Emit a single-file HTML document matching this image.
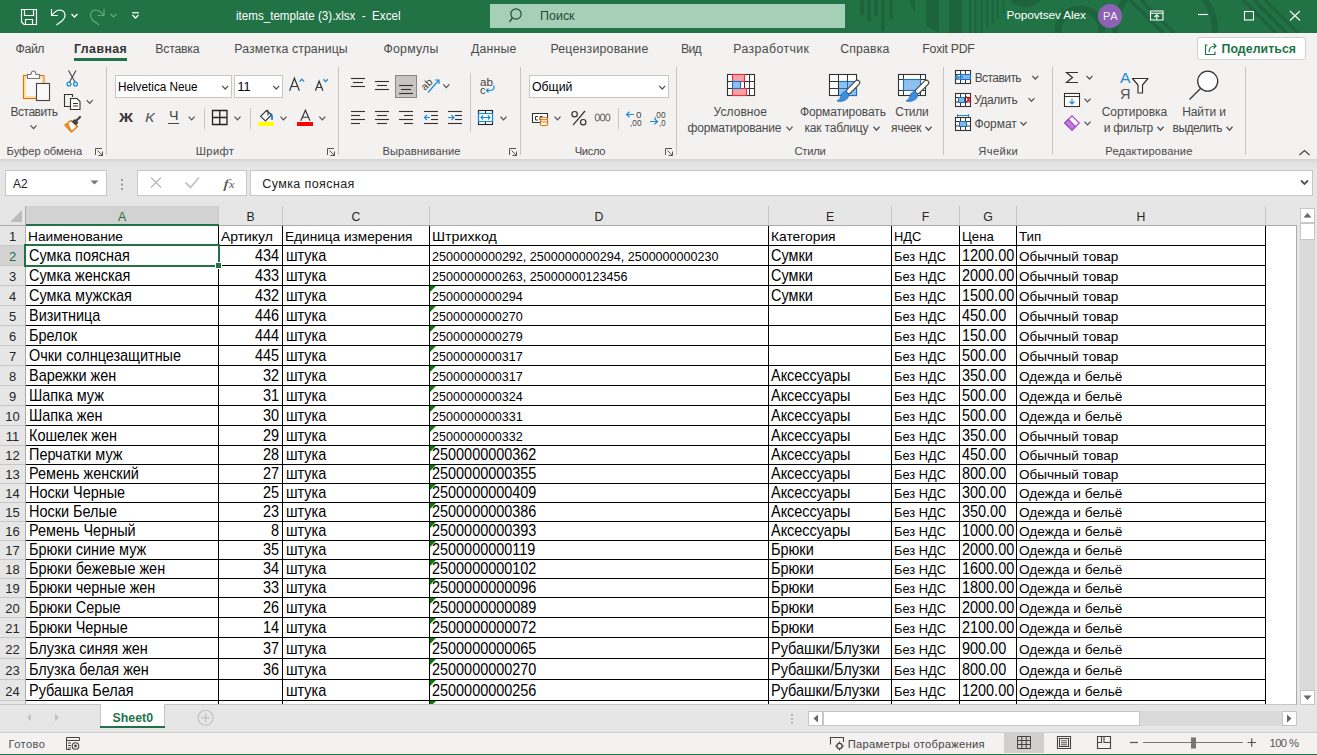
<!DOCTYPE html>
<html><head><meta charset="utf-8"><style>
html,body{margin:0;padding:0;}
body{width:1317px;height:755px;overflow:hidden;position:relative;background:#f3f2f1;font-family:"Liberation Sans",sans-serif;}
body>div,body>span,body>svg{position:absolute;}
span{white-space:pre;}
</style></head><body>
<div style="left:0px;top:0px;width:1317px;height:33px;background:#217346;"></div>
<span style="left:236.40px;top:10.20px;font-family:'Liberation Sans',sans-serif;font-size:12px;line-height:12px;color:#fff;font-weight:400;font-style:normal;transform:scaleX(0.9674);transform-origin:0 0;">items_template (3).xlsx  -  Excel</span>
<div style="left:490px;top:4px;width:355px;height:24px;background:#a6cfb7;"></div>
<span style="left:540.30px;top:10.20px;font-family:'Liberation Sans',sans-serif;font-size:12px;line-height:12px;color:#1d4d33;font-weight:400;font-style:normal;transform:scaleX(1.0401);transform-origin:0 0;">Поиск</span>
<svg style="left:0px;top:0px;" width="1317" height="33" viewBox="0 0 1317 33"><g fill="#1d643c"><rect x="860" y="0" width="4" height="15"/><rect x="867" y="0" width="4" height="22"/><rect x="874" y="0" width="4" height="16"/><rect x="881" y="0" width="4" height="31"/><rect x="889" y="0" width="4" height="19"/><path d="M909,0 H915 V13 Z"/><path d="M926,0 H939 V33 L926,26 Z"/><rect x="949" y="0" width="13" height="33"/><rect x="969" y="0" width="2" height="33"/><rect x="974.5" y="0" width="2" height="33"/><rect x="980.5" y="0" width="2" height="33"/><rect x="986" y="0" width="2" height="28"/><rect x="991.5" y="0" width="2" height="24"/><rect x="996.5" y="0" width="2" height="19"/><rect x="1002.5" y="0" width="2" height="13"/><circle cx="1025" cy="-14" r="21"/></g><circle cx="1080" cy="31" r="22" fill="none" stroke="#1d643c" stroke-width="7"/><path d="M1130,0 L1163,33 M1141,0 L1174,33 M1243,0 L1276,33 M1254,0 L1287,33 M1265,0 L1298,33" stroke="#1d643c" stroke-width="3.5"/><circle cx="1165" cy="30" r="50" fill="none" stroke="#1d643c" stroke-width="6"/><circle cx="1110" cy="16" r="12" fill="#8d62b5"/></svg>
<span style="left:1006.50px;top:10.37px;font-family:'Liberation Sans',sans-serif;font-size:11.8px;line-height:11.8px;color:#fff;font-weight:400;font-style:normal;letter-spacing:-0.098px;">Popovtsev Alex</span>
<span style="left:1103.05px;top:11.05px;font-family:'Liberation Sans',sans-serif;font-size:11px;line-height:11px;color:#f4eefa;font-weight:400;font-style:normal;letter-spacing:0.641px;">PA</span>
<div style="left:0px;top:33px;width:1317px;height:126px;background:#f3f2f1;"></div>
<span style="left:15.60px;top:42.95px;font-family:'Liberation Sans',sans-serif;font-size:12.3px;line-height:12.3px;color:#4a4a4a;font-weight:400;font-style:normal;letter-spacing:-0.445px;">Файл</span>
<span style="left:74.00px;top:42.95px;font-family:'Liberation Sans',sans-serif;font-size:12.3px;line-height:12.3px;color:#333;font-weight:700;font-style:normal;letter-spacing:0.464px;">Главная</span>
<span style="left:155.30px;top:42.95px;font-family:'Liberation Sans',sans-serif;font-size:12.3px;line-height:12.3px;color:#4a4a4a;font-weight:400;font-style:normal;letter-spacing:-0.253px;">Вставка</span>
<span style="left:234.30px;top:42.95px;font-family:'Liberation Sans',sans-serif;font-size:12.3px;line-height:12.3px;color:#4a4a4a;font-weight:400;font-style:normal;letter-spacing:0.115px;">Разметка страницы</span>
<span style="left:383.40px;top:42.95px;font-family:'Liberation Sans',sans-serif;font-size:12.3px;line-height:12.3px;color:#4a4a4a;font-weight:400;font-style:normal;letter-spacing:0.247px;">Формулы</span>
<span style="left:470.90px;top:42.95px;font-family:'Liberation Sans',sans-serif;font-size:12.3px;line-height:12.3px;color:#4a4a4a;font-weight:400;font-style:normal;letter-spacing:0.212px;">Данные</span>
<span style="left:550.40px;top:42.95px;font-family:'Liberation Sans',sans-serif;font-size:12.3px;line-height:12.3px;color:#4a4a4a;font-weight:400;font-style:normal;letter-spacing:0.227px;">Рецензирование</span>
<span style="left:681.00px;top:42.95px;font-family:'Liberation Sans',sans-serif;font-size:12.3px;line-height:12.3px;color:#4a4a4a;font-weight:400;font-style:normal;letter-spacing:-0.775px;">Вид</span>
<span style="left:733.30px;top:42.95px;font-family:'Liberation Sans',sans-serif;font-size:12.3px;line-height:12.3px;color:#4a4a4a;font-weight:400;font-style:normal;letter-spacing:0.398px;">Разработчик</span>
<span style="left:840.30px;top:42.95px;font-family:'Liberation Sans',sans-serif;font-size:12.3px;line-height:12.3px;color:#4a4a4a;font-weight:400;font-style:normal;letter-spacing:0.125px;">Справка</span>
<span style="left:922.30px;top:42.95px;font-family:'Liberation Sans',sans-serif;font-size:12.3px;line-height:12.3px;color:#4a4a4a;font-weight:400;font-style:normal;letter-spacing:-0.259px;">Foxit PDF</span>
<div style="left:74px;top:58px;width:53px;height:3px;background:#217346;"></div>
<div style="left:1197px;top:37px;width:109px;height:23px;background:#fff;border:1px solid #d2d0ce;border-radius:2px;box-sizing:border-box;"></div>
<span style="left:1221.50px;top:42.95px;font-family:'Liberation Sans',sans-serif;font-size:12.3px;line-height:12.3px;color:#217346;font-weight:700;font-style:normal;letter-spacing:0.076px;">Поделиться</span>
<div style="left:0px;top:159px;width:1317px;height:11px;background:linear-gradient(#d4d4d4,#e2e2e2 40%,#e6e6e6);"></div>
<div style="left:106px;top:67px;width:1px;height:88px;background:#c8c6c4;"></div>
<div style="left:338px;top:67px;width:1px;height:88px;background:#c8c6c4;"></div>
<div style="left:520px;top:67px;width:1px;height:88px;background:#c8c6c4;"></div>
<div style="left:676px;top:67px;width:1px;height:88px;background:#c8c6c4;"></div>
<div style="left:943px;top:67px;width:1px;height:88px;background:#c8c6c4;"></div>
<div style="left:1052px;top:67px;width:1px;height:88px;background:#c8c6c4;"></div>
<div style="left:1245px;top:67px;width:1px;height:88px;background:#c8c6c4;"></div>
<span style="left:6.60px;top:145.88px;font-family:'Liberation Sans',sans-serif;font-size:11.2px;line-height:11.2px;color:#4a4a4a;font-weight:400;font-style:normal;letter-spacing:-0.039px;">Буфер обмена</span>
<span style="left:195.70px;top:145.88px;font-family:'Liberation Sans',sans-serif;font-size:11.2px;line-height:11.2px;color:#4a4a4a;font-weight:400;font-style:normal;letter-spacing:0.372px;">Шрифт</span>
<span style="left:382.40px;top:145.88px;font-family:'Liberation Sans',sans-serif;font-size:11.2px;line-height:11.2px;color:#4a4a4a;font-weight:400;font-style:normal;letter-spacing:0.108px;">Выравнивание</span>
<span style="left:574.80px;top:145.88px;font-family:'Liberation Sans',sans-serif;font-size:11.2px;line-height:11.2px;color:#4a4a4a;font-weight:400;font-style:normal;letter-spacing:-0.397px;">Число</span>
<span style="left:794.40px;top:145.88px;font-family:'Liberation Sans',sans-serif;font-size:11.2px;line-height:11.2px;color:#4a4a4a;font-weight:400;font-style:normal;letter-spacing:-0.209px;">Стили</span>
<span style="left:978.30px;top:145.88px;font-family:'Liberation Sans',sans-serif;font-size:11.2px;line-height:11.2px;color:#4a4a4a;font-weight:400;font-style:normal;letter-spacing:0.374px;">Ячейки</span>
<span style="left:1105.30px;top:145.88px;font-family:'Liberation Sans',sans-serif;font-size:11.2px;line-height:11.2px;color:#4a4a4a;font-weight:400;font-style:normal;letter-spacing:0.151px;">Редактирование</span>
<span style="left:10.60px;top:106.20px;font-family:'Liberation Sans',sans-serif;font-size:12px;line-height:12px;color:#4a4a4a;font-weight:400;font-style:normal;letter-spacing:-0.511px;">Вставить</span>
<div style="left:115px;top:75px;width:117px;height:23px;background:#fff;border:1px solid #c6c6c6;box-sizing:border-box;"></div>
<div style="left:234px;top:75px;width:49px;height:23px;background:#fff;border:1px solid #c6c6c6;box-sizing:border-box;"></div>
<span style="left:118.30px;top:80.78px;font-family:'Liberation Sans',sans-serif;font-size:12.5px;line-height:12.5px;color:#000;font-weight:400;font-style:normal;transform:scaleX(0.9391);transform-origin:0 0;">Helvetica Neue</span>
<span style="left:237.60px;top:80.78px;font-family:'Liberation Sans',sans-serif;font-size:12.5px;line-height:12.5px;color:#000;font-weight:400;font-style:normal;">11</span>
<span style="left:118.50px;top:110.93px;font-family:'Liberation Sans',sans-serif;font-size:13.5px;line-height:13.5px;color:#333;font-weight:700;font-style:normal;transform:scaleX(1.1472);transform-origin:0 0;">Ж</span>
<span style="left:145.00px;top:110.93px;font-family:'Liberation Sans',sans-serif;font-size:13.5px;line-height:13.5px;color:#555;font-weight:400;font-style:italic;transform:scaleX(1.1922);transform-origin:0 0;">К</span>
<span style="left:168.80px;top:109.35px;font-family:'Liberation Sans',sans-serif;font-size:13px;line-height:13px;color:#444;font-weight:400;font-style:normal;transform:scaleX(1.0955);transform-origin:0 0;">Ч</span>
<div style="left:168px;top:123px;width:11px;height:1px;background:#444;"></div>
<div style="left:204px;top:108px;width:1px;height:21px;background:#c8c6c4;"></div>
<div style="left:250px;top:108px;width:1px;height:21px;background:#c8c6c4;"></div>
<div style="left:258px;top:122px;width:16px;height:4px;background:#ffff00;"></div>
<div style="left:297px;top:122px;width:16px;height:4px;background:#ff0000;"></div>
<div style="left:470px;top:73px;width:1px;height:59px;background:#c8c6c4;"></div>
<span style="left:480.00px;top:77.05px;font-family:'Liberation Sans',sans-serif;font-size:11px;line-height:11px;color:#444;font-weight:400;font-style:normal;transform:scaleX(1.0612);transform-origin:0 0;">ab</span>
<span style="left:480.00px;top:85.05px;font-family:'Liberation Sans',sans-serif;font-size:11px;line-height:11px;color:#444;font-weight:400;font-style:normal;">c</span>
<div style="left:529px;top:75px;width:140px;height:23px;background:#fff;border:1px solid #c6c6c6;box-sizing:border-box;"></div>
<span style="left:532.30px;top:80.78px;font-family:'Liberation Sans',sans-serif;font-size:12.5px;line-height:12.5px;color:#000;font-weight:400;font-style:normal;transform:scaleX(0.9844);transform-origin:0 0;">Общий</span>
<div style="left:618px;top:108px;width:1px;height:21px;background:#c8c6c4;"></div>
<span style="left:636.00px;top:110.33px;font-family:'Liberation Sans',sans-serif;font-size:9.5px;line-height:9.5px;color:#444;font-weight:400;font-style:normal;transform:scaleX(1.0383);transform-origin:0 0;">0</span>
<span style="left:629.50px;top:118.33px;font-family:'Liberation Sans',sans-serif;font-size:9.5px;line-height:9.5px;color:#444;font-weight:400;font-style:normal;transform:scaleX(0.8700);transform-origin:0 0;">,00</span>
<span style="left:653.50px;top:110.33px;font-family:'Liberation Sans',sans-serif;font-size:9.5px;line-height:9.5px;color:#444;font-weight:400;font-style:normal;transform:scaleX(0.8700);transform-origin:0 0;">,00</span>
<span style="left:658.50px;top:118.33px;font-family:'Liberation Sans',sans-serif;font-size:9.5px;line-height:9.5px;color:#444;font-weight:400;font-style:normal;transform:scaleX(0.8189);transform-origin:0 0;">,0</span>
<span style="left:713.60px;top:106.20px;font-family:'Liberation Sans',sans-serif;font-size:12px;line-height:12px;color:#4a4a4a;font-weight:400;font-style:normal;letter-spacing:0.045px;">Условное</span>
<span style="left:687.50px;top:122.20px;font-family:'Liberation Sans',sans-serif;font-size:12px;line-height:12px;color:#4a4a4a;font-weight:400;font-style:normal;letter-spacing:-0.181px;">форматирование</span>
<span style="left:799.90px;top:106.20px;font-family:'Liberation Sans',sans-serif;font-size:12px;line-height:12px;color:#4a4a4a;font-weight:400;font-style:normal;letter-spacing:-0.090px;">Форматировать</span>
<span style="left:804.50px;top:122.20px;font-family:'Liberation Sans',sans-serif;font-size:12px;line-height:12px;color:#4a4a4a;font-weight:400;font-style:normal;letter-spacing:-0.172px;">как таблицу</span>
<span style="left:895.30px;top:106.20px;font-family:'Liberation Sans',sans-serif;font-size:12px;line-height:12px;color:#4a4a4a;font-weight:400;font-style:normal;letter-spacing:-0.295px;">Стили</span>
<span style="left:891.10px;top:122.20px;font-family:'Liberation Sans',sans-serif;font-size:12px;line-height:12px;color:#4a4a4a;font-weight:400;font-style:normal;letter-spacing:-0.215px;">ячеек</span>
<span style="left:974.70px;top:72.20px;font-family:'Liberation Sans',sans-serif;font-size:12px;line-height:12px;color:#4a4a4a;font-weight:400;font-style:normal;letter-spacing:-0.568px;">Вставить</span>
<span style="left:974.00px;top:94.20px;font-family:'Liberation Sans',sans-serif;font-size:12px;line-height:12px;color:#4a4a4a;font-weight:400;font-style:normal;letter-spacing:-0.355px;">Удалить</span>
<span style="left:974.40px;top:118.20px;font-family:'Liberation Sans',sans-serif;font-size:12px;line-height:12px;color:#4a4a4a;font-weight:400;font-style:normal;letter-spacing:-0.048px;">Формат</span>
<span style="left:1119.50px;top:71.08px;font-family:'Liberation Sans',sans-serif;font-size:14.5px;line-height:14.5px;color:#1e8bd8;font-weight:400;font-style:normal;transform:scaleX(1.0856);transform-origin:0 0;">A</span>
<span style="left:1119.50px;top:86.50px;font-family:'Liberation Sans',sans-serif;font-size:14px;line-height:14px;color:#555;font-weight:400;font-style:normal;transform:scaleX(1.0370);transform-origin:0 0;">Я</span>
<span style="left:1101.70px;top:106.20px;font-family:'Liberation Sans',sans-serif;font-size:12px;line-height:12px;color:#4a4a4a;font-weight:400;font-style:normal;letter-spacing:-0.040px;">Сортировка</span>
<span style="left:1103.70px;top:122.20px;font-family:'Liberation Sans',sans-serif;font-size:12px;line-height:12px;color:#4a4a4a;font-weight:400;font-style:normal;letter-spacing:-0.230px;">и фильтр</span>
<span style="left:1182.20px;top:106.20px;font-family:'Liberation Sans',sans-serif;font-size:12px;line-height:12px;color:#4a4a4a;font-weight:400;font-style:normal;letter-spacing:-0.080px;">Найти и</span>
<span style="left:1172.60px;top:122.20px;font-family:'Liberation Sans',sans-serif;font-size:12px;line-height:12px;color:#4a4a4a;font-weight:400;font-style:normal;letter-spacing:-0.533px;">выделить</span>
<div style="left:0px;top:170px;width:1317px;height:36px;background:#e6e6e6;"></div>
<div style="left:5px;top:170px;width:102px;height:26px;background:#fff;border:1px solid #c6c6c6;box-sizing:border-box;"></div>
<span style="left:12.50px;top:177.78px;font-family:'Liberation Sans',sans-serif;font-size:12.5px;line-height:12.5px;color:#222;font-weight:400;font-style:normal;transform:scaleX(0.9479);transform-origin:0 0;">A2</span>
<div style="left:137px;top:170px;width:110px;height:26px;background:#fff;border:1px solid #c6c6c6;box-sizing:border-box;"></div>
<span style="left:223.00px;top:176.93px;font-family:'Liberation Serif',sans-serif;font-size:13.5px;line-height:13.5px;color:#555;font-weight:400;font-style:italic;transform:scaleX(1.5934);transform-origin:0 0;">f</span>
<span style="left:229.00px;top:179.90px;font-family:'Liberation Serif',sans-serif;font-size:10px;line-height:10px;color:#555;font-weight:400;font-style:italic;transform:scaleX(1.2351);transform-origin:0 0;">x</span>
<div style="left:250px;top:170px;width:1063px;height:26px;background:#fff;border:1px solid #c6c6c6;box-sizing:border-box;"></div>
<span style="left:262.20px;top:177.78px;font-family:'Liberation Sans',sans-serif;font-size:12.5px;line-height:12.5px;color:#222;font-weight:400;font-style:normal;letter-spacing:0.411px;">Сумка поясная</span>
<div style="left:0px;top:206px;width:1297px;height:19px;background:#e6e6e6;"></div>
<div style="left:0px;top:225px;width:25px;height:479px;background:#e6e6e6;"></div>
<div style="left:26px;top:226px;width:1270px;height:478px;background:#fff;"></div>
<div style="left:218px;top:206px;width:1px;height:19px;background:#c6c6c6;"></div>
<div style="left:282px;top:206px;width:1px;height:19px;background:#c6c6c6;"></div>
<div style="left:429px;top:206px;width:1px;height:19px;background:#c6c6c6;"></div>
<div style="left:768px;top:206px;width:1px;height:19px;background:#c6c6c6;"></div>
<div style="left:891px;top:206px;width:1px;height:19px;background:#c6c6c6;"></div>
<div style="left:959px;top:206px;width:1px;height:19px;background:#c6c6c6;"></div>
<div style="left:1016px;top:206px;width:1px;height:19px;background:#c6c6c6;"></div>
<div style="left:1265px;top:206px;width:1px;height:19px;background:#c6c6c6;"></div>
<div style="left:26px;top:206px;width:192px;height:18px;background:#d2d2d2;"></div>
<div style="left:0px;top:225px;width:1297px;height:1px;background:#ababab;"></div>
<div style="left:26px;top:224px;width:193px;height:2px;background:#217346;"></div>
<svg style="left:10px;top:210px;" width="13" height="12" viewBox="0 0 13 12"><polygon points="12,0 12,12 0,12" fill="#bcbcbc"/></svg>
<span style="left:117.90px;top:210.94px;font-family:'Liberation Sans',sans-serif;font-size:12.3px;line-height:12.3px;color:#217346;font-weight:400;font-style:normal;">A</span>
<span style="left:246.40px;top:210.94px;font-family:'Liberation Sans',sans-serif;font-size:12.3px;line-height:12.3px;color:#262626;font-weight:400;font-style:normal;">B</span>
<span style="left:351.55px;top:210.94px;font-family:'Liberation Sans',sans-serif;font-size:12.3px;line-height:12.3px;color:#262626;font-weight:400;font-style:normal;">C</span>
<span style="left:594.55px;top:210.94px;font-family:'Liberation Sans',sans-serif;font-size:12.3px;line-height:12.3px;color:#262626;font-weight:400;font-style:normal;">D</span>
<span style="left:825.90px;top:210.94px;font-family:'Liberation Sans',sans-serif;font-size:12.3px;line-height:12.3px;color:#262626;font-weight:400;font-style:normal;">E</span>
<span style="left:921.74px;top:210.94px;font-family:'Liberation Sans',sans-serif;font-size:12.3px;line-height:12.3px;color:#262626;font-weight:400;font-style:normal;">F</span>
<span style="left:983.21px;top:210.94px;font-family:'Liberation Sans',sans-serif;font-size:12.3px;line-height:12.3px;color:#262626;font-weight:400;font-style:normal;">G</span>
<span style="left:1136.55px;top:210.94px;font-family:'Liberation Sans',sans-serif;font-size:12.3px;line-height:12.3px;color:#262626;font-weight:400;font-style:normal;">H</span>
<div style="left:25px;top:206px;width:1px;height:498px;background:#ababab;"></div>
<div style="left:0px;top:246px;width:25px;height:19px;background:#d2d2d2;"></div>
<div style="left:0px;top:245px;width:25px;height:1px;background:#c6c6c6;"></div>
<span style="left:8.88px;top:230.35px;font-family:'Liberation Sans',sans-serif;font-size:13px;line-height:13px;color:#262626;font-weight:400;font-style:normal;">1</span>
<div style="left:0px;top:265px;width:25px;height:1px;background:#c6c6c6;"></div>
<span style="left:8.88px;top:250.35px;font-family:'Liberation Sans',sans-serif;font-size:13px;line-height:13px;color:#217346;font-weight:400;font-style:normal;">2</span>
<div style="left:0px;top:285px;width:25px;height:1px;background:#c6c6c6;"></div>
<span style="left:8.88px;top:270.35px;font-family:'Liberation Sans',sans-serif;font-size:13px;line-height:13px;color:#262626;font-weight:400;font-style:normal;">3</span>
<div style="left:0px;top:305px;width:25px;height:1px;background:#c6c6c6;"></div>
<span style="left:8.88px;top:290.35px;font-family:'Liberation Sans',sans-serif;font-size:13px;line-height:13px;color:#262626;font-weight:400;font-style:normal;">4</span>
<div style="left:0px;top:325px;width:25px;height:1px;background:#c6c6c6;"></div>
<span style="left:8.88px;top:310.35px;font-family:'Liberation Sans',sans-serif;font-size:13px;line-height:13px;color:#262626;font-weight:400;font-style:normal;">5</span>
<div style="left:0px;top:345px;width:25px;height:1px;background:#c6c6c6;"></div>
<span style="left:8.88px;top:330.35px;font-family:'Liberation Sans',sans-serif;font-size:13px;line-height:13px;color:#262626;font-weight:400;font-style:normal;">6</span>
<div style="left:0px;top:365px;width:25px;height:1px;background:#c6c6c6;"></div>
<span style="left:8.88px;top:350.35px;font-family:'Liberation Sans',sans-serif;font-size:13px;line-height:13px;color:#262626;font-weight:400;font-style:normal;">7</span>
<div style="left:0px;top:385px;width:25px;height:1px;background:#c6c6c6;"></div>
<span style="left:8.88px;top:370.35px;font-family:'Liberation Sans',sans-serif;font-size:13px;line-height:13px;color:#262626;font-weight:400;font-style:normal;">8</span>
<div style="left:0px;top:405px;width:25px;height:1px;background:#c6c6c6;"></div>
<span style="left:8.88px;top:390.35px;font-family:'Liberation Sans',sans-serif;font-size:13px;line-height:13px;color:#262626;font-weight:400;font-style:normal;">9</span>
<div style="left:0px;top:425px;width:25px;height:1px;background:#c6c6c6;"></div>
<span style="left:5.27px;top:410.35px;font-family:'Liberation Sans',sans-serif;font-size:13px;line-height:13px;color:#262626;font-weight:400;font-style:normal;">10</span>
<div style="left:0px;top:445px;width:25px;height:1px;background:#c6c6c6;"></div>
<span style="left:5.75px;top:430.35px;font-family:'Liberation Sans',sans-serif;font-size:13px;line-height:13px;color:#262626;font-weight:400;font-style:normal;">11</span>
<div style="left:0px;top:464px;width:25px;height:1px;background:#c6c6c6;"></div>
<span style="left:5.27px;top:449.35px;font-family:'Liberation Sans',sans-serif;font-size:13px;line-height:13px;color:#262626;font-weight:400;font-style:normal;">12</span>
<div style="left:0px;top:483px;width:25px;height:1px;background:#c6c6c6;"></div>
<span style="left:5.27px;top:468.35px;font-family:'Liberation Sans',sans-serif;font-size:13px;line-height:13px;color:#262626;font-weight:400;font-style:normal;">13</span>
<div style="left:0px;top:502px;width:25px;height:1px;background:#c6c6c6;"></div>
<span style="left:5.27px;top:487.35px;font-family:'Liberation Sans',sans-serif;font-size:13px;line-height:13px;color:#262626;font-weight:400;font-style:normal;">14</span>
<div style="left:0px;top:521px;width:25px;height:1px;background:#c6c6c6;"></div>
<span style="left:5.27px;top:506.35px;font-family:'Liberation Sans',sans-serif;font-size:13px;line-height:13px;color:#262626;font-weight:400;font-style:normal;">15</span>
<div style="left:0px;top:540px;width:25px;height:1px;background:#c6c6c6;"></div>
<span style="left:5.27px;top:525.35px;font-family:'Liberation Sans',sans-serif;font-size:13px;line-height:13px;color:#262626;font-weight:400;font-style:normal;">16</span>
<div style="left:0px;top:559px;width:25px;height:1px;background:#c6c6c6;"></div>
<span style="left:5.27px;top:544.35px;font-family:'Liberation Sans',sans-serif;font-size:13px;line-height:13px;color:#262626;font-weight:400;font-style:normal;">17</span>
<div style="left:0px;top:578px;width:25px;height:1px;background:#c6c6c6;"></div>
<span style="left:5.27px;top:563.35px;font-family:'Liberation Sans',sans-serif;font-size:13px;line-height:13px;color:#262626;font-weight:400;font-style:normal;">18</span>
<div style="left:0px;top:597px;width:25px;height:1px;background:#c6c6c6;"></div>
<span style="left:5.27px;top:582.35px;font-family:'Liberation Sans',sans-serif;font-size:13px;line-height:13px;color:#262626;font-weight:400;font-style:normal;">19</span>
<div style="left:0px;top:617px;width:25px;height:1px;background:#c6c6c6;"></div>
<span style="left:5.27px;top:602.35px;font-family:'Liberation Sans',sans-serif;font-size:13px;line-height:13px;color:#262626;font-weight:400;font-style:normal;">20</span>
<div style="left:0px;top:637px;width:25px;height:1px;background:#c6c6c6;"></div>
<span style="left:5.27px;top:622.35px;font-family:'Liberation Sans',sans-serif;font-size:13px;line-height:13px;color:#262626;font-weight:400;font-style:normal;">21</span>
<div style="left:0px;top:658px;width:25px;height:1px;background:#c6c6c6;"></div>
<span style="left:5.27px;top:643.35px;font-family:'Liberation Sans',sans-serif;font-size:13px;line-height:13px;color:#262626;font-weight:400;font-style:normal;">22</span>
<div style="left:0px;top:679px;width:25px;height:1px;background:#c6c6c6;"></div>
<span style="left:5.27px;top:664.35px;font-family:'Liberation Sans',sans-serif;font-size:13px;line-height:13px;color:#262626;font-weight:400;font-style:normal;">23</span>
<div style="left:0px;top:700px;width:25px;height:1px;background:#c6c6c6;"></div>
<span style="left:5.27px;top:685.35px;font-family:'Liberation Sans',sans-serif;font-size:13px;line-height:13px;color:#262626;font-weight:400;font-style:normal;">24</span>
<div style="left:26px;top:245px;width:1239px;height:1px;background:#000;"></div>
<div style="left:26px;top:265px;width:1239px;height:1px;background:#000;"></div>
<div style="left:26px;top:285px;width:1239px;height:1px;background:#000;"></div>
<div style="left:26px;top:305px;width:1239px;height:1px;background:#000;"></div>
<div style="left:26px;top:325px;width:1239px;height:1px;background:#000;"></div>
<div style="left:26px;top:345px;width:1239px;height:1px;background:#000;"></div>
<div style="left:26px;top:365px;width:1239px;height:1px;background:#000;"></div>
<div style="left:26px;top:385px;width:1239px;height:1px;background:#000;"></div>
<div style="left:26px;top:405px;width:1239px;height:1px;background:#000;"></div>
<div style="left:26px;top:425px;width:1239px;height:1px;background:#000;"></div>
<div style="left:26px;top:445px;width:1239px;height:1px;background:#000;"></div>
<div style="left:26px;top:464px;width:1239px;height:1px;background:#000;"></div>
<div style="left:26px;top:483px;width:1239px;height:1px;background:#000;"></div>
<div style="left:26px;top:502px;width:1239px;height:1px;background:#000;"></div>
<div style="left:26px;top:521px;width:1239px;height:1px;background:#000;"></div>
<div style="left:26px;top:540px;width:1239px;height:1px;background:#000;"></div>
<div style="left:26px;top:559px;width:1239px;height:1px;background:#000;"></div>
<div style="left:26px;top:578px;width:1239px;height:1px;background:#000;"></div>
<div style="left:26px;top:597px;width:1239px;height:1px;background:#000;"></div>
<div style="left:26px;top:617px;width:1239px;height:1px;background:#000;"></div>
<div style="left:26px;top:637px;width:1239px;height:1px;background:#000;"></div>
<div style="left:26px;top:658px;width:1239px;height:1px;background:#000;"></div>
<div style="left:26px;top:679px;width:1239px;height:1px;background:#000;"></div>
<div style="left:26px;top:700px;width:1239px;height:1px;background:#000;"></div>
<div style="left:218px;top:226px;width:1px;height:478px;background:#000;"></div>
<div style="left:282px;top:226px;width:1px;height:478px;background:#000;"></div>
<div style="left:429px;top:226px;width:1px;height:478px;background:#000;"></div>
<div style="left:768px;top:226px;width:1px;height:478px;background:#000;"></div>
<div style="left:891px;top:226px;width:1px;height:478px;background:#000;"></div>
<div style="left:959px;top:226px;width:1px;height:478px;background:#000;"></div>
<div style="left:1016px;top:226px;width:1px;height:478px;background:#000;"></div>
<div style="left:1265px;top:226px;width:1px;height:478px;background:#000;"></div>
<div style="left:1296px;top:225px;width:1px;height:479px;background:#ababab;"></div>
<span style="left:28.40px;top:230.09px;font-family:'Liberation Sans',sans-serif;font-size:13.3px;line-height:13.3px;color:#000;font-weight:400;font-style:normal;transform:scaleX(1.0305);transform-origin:0 0;">Наименование</span>
<span style="left:221.40px;top:230.09px;font-family:'Liberation Sans',sans-serif;font-size:13.3px;line-height:13.3px;color:#000;font-weight:400;font-style:normal;transform:scaleX(1.0468);transform-origin:0 0;">Артикул</span>
<span style="left:285.40px;top:230.09px;font-family:'Liberation Sans',sans-serif;font-size:13.3px;line-height:13.3px;color:#000;font-weight:400;font-style:normal;transform:scaleX(1.0253);transform-origin:0 0;">Единица измерения</span>
<span style="left:432.40px;top:230.09px;font-family:'Liberation Sans',sans-serif;font-size:13.3px;line-height:13.3px;color:#000;font-weight:400;font-style:normal;transform:scaleX(1.0697);transform-origin:0 0;">Штрихкод</span>
<span style="left:771.40px;top:230.09px;font-family:'Liberation Sans',sans-serif;font-size:13.3px;line-height:13.3px;color:#000;font-weight:400;font-style:normal;transform:scaleX(1.0391);transform-origin:0 0;">Категория</span>
<span style="left:894.40px;top:230.09px;font-family:'Liberation Sans',sans-serif;font-size:13.3px;line-height:13.3px;color:#000;font-weight:400;font-style:normal;transform:scaleX(0.9710);transform-origin:0 0;">НДС</span>
<span style="left:962.40px;top:230.09px;font-family:'Liberation Sans',sans-serif;font-size:13.3px;line-height:13.3px;color:#000;font-weight:400;font-style:normal;transform:scaleX(0.9942);transform-origin:0 0;">Цена</span>
<span style="left:1019.40px;top:230.09px;font-family:'Liberation Sans',sans-serif;font-size:13.3px;line-height:13.3px;color:#000;font-weight:400;font-style:normal;transform:scaleX(1.0058);transform-origin:0 0;">Тип</span>
<span style="left:28.70px;top:248.93px;font-family:'Liberation Sans',sans-serif;font-size:14.67px;line-height:14.67px;color:#000;font-weight:400;font-style:normal;transform:scale(0.9850,1.0900);transform-origin:0 12.07px;">Сумка поясная</span>
<span style="left:255.10px;top:248.93px;font-family:'Liberation Sans',sans-serif;font-size:14.67px;line-height:14.67px;color:#000;font-weight:400;font-style:normal;transform:scale(0.9850,1.0900);transform-origin:0 12.07px;">434</span>
<span style="left:285.70px;top:248.93px;font-family:'Liberation Sans',sans-serif;font-size:14.67px;line-height:14.67px;color:#000;font-weight:400;font-style:normal;transform:scale(0.9850,1.0900);transform-origin:0 12.07px;">штука</span>
<span style="left:432.30px;top:250.09px;font-family:'Liberation Sans',sans-serif;font-size:13.3px;line-height:13.3px;color:#000;font-weight:400;font-style:normal;transform:scaleX(0.9450);transform-origin:0 0;">2500000000292, 2500000000294, 2500000000230</span>
<span style="left:771.10px;top:248.93px;font-family:'Liberation Sans',sans-serif;font-size:14.67px;line-height:14.67px;color:#000;font-weight:400;font-style:normal;transform:scale(0.9850,1.0900);transform-origin:0 12.07px;">Сумки</span>
<span style="left:894.20px;top:250.09px;font-family:'Liberation Sans',sans-serif;font-size:13.3px;line-height:13.3px;color:#000;font-weight:400;font-style:normal;transform:scaleX(0.9639);transform-origin:0 0;">Без НДС</span>
<span style="left:962.30px;top:248.93px;font-family:'Liberation Sans',sans-serif;font-size:14.67px;line-height:14.67px;color:#000;font-weight:400;font-style:normal;transform:scale(0.9850,1.0900);transform-origin:0 12.07px;">1200.00</span>
<span style="left:1019.30px;top:250.09px;font-family:'Liberation Sans',sans-serif;font-size:13.3px;line-height:13.3px;color:#000;font-weight:400;font-style:normal;transform:scaleX(1.0183);transform-origin:0 0;">Обычный товар</span>
<span style="left:28.70px;top:268.93px;font-family:'Liberation Sans',sans-serif;font-size:14.67px;line-height:14.67px;color:#000;font-weight:400;font-style:normal;transform:scale(0.9850,1.0900);transform-origin:0 12.07px;">Сумка женская</span>
<span style="left:255.10px;top:268.93px;font-family:'Liberation Sans',sans-serif;font-size:14.67px;line-height:14.67px;color:#000;font-weight:400;font-style:normal;transform:scale(0.9850,1.0900);transform-origin:0 12.07px;">433</span>
<span style="left:285.70px;top:268.93px;font-family:'Liberation Sans',sans-serif;font-size:14.67px;line-height:14.67px;color:#000;font-weight:400;font-style:normal;transform:scale(0.9850,1.0900);transform-origin:0 12.07px;">штука</span>
<span style="left:432.30px;top:270.09px;font-family:'Liberation Sans',sans-serif;font-size:13.3px;line-height:13.3px;color:#000;font-weight:400;font-style:normal;transform:scaleX(0.9442);transform-origin:0 0;">2500000000263, 25000000123456</span>
<span style="left:771.10px;top:268.93px;font-family:'Liberation Sans',sans-serif;font-size:14.67px;line-height:14.67px;color:#000;font-weight:400;font-style:normal;transform:scale(0.9850,1.0900);transform-origin:0 12.07px;">Сумки</span>
<span style="left:894.20px;top:270.09px;font-family:'Liberation Sans',sans-serif;font-size:13.3px;line-height:13.3px;color:#000;font-weight:400;font-style:normal;transform:scaleX(0.9639);transform-origin:0 0;">Без НДС</span>
<span style="left:962.30px;top:268.93px;font-family:'Liberation Sans',sans-serif;font-size:14.67px;line-height:14.67px;color:#000;font-weight:400;font-style:normal;transform:scale(0.9850,1.0900);transform-origin:0 12.07px;">2000.00</span>
<span style="left:1019.30px;top:270.09px;font-family:'Liberation Sans',sans-serif;font-size:13.3px;line-height:13.3px;color:#000;font-weight:400;font-style:normal;transform:scaleX(1.0183);transform-origin:0 0;">Обычный товар</span>
<span style="left:28.70px;top:288.93px;font-family:'Liberation Sans',sans-serif;font-size:14.67px;line-height:14.67px;color:#000;font-weight:400;font-style:normal;transform:scale(0.9850,1.0900);transform-origin:0 12.07px;">Сумка мужская</span>
<span style="left:255.10px;top:288.93px;font-family:'Liberation Sans',sans-serif;font-size:14.67px;line-height:14.67px;color:#000;font-weight:400;font-style:normal;transform:scale(0.9850,1.0900);transform-origin:0 12.07px;">432</span>
<span style="left:285.70px;top:288.93px;font-family:'Liberation Sans',sans-serif;font-size:14.67px;line-height:14.67px;color:#000;font-weight:400;font-style:normal;transform:scale(0.9850,1.0900);transform-origin:0 12.07px;">штука</span>
<span style="left:432.30px;top:290.09px;font-family:'Liberation Sans',sans-serif;font-size:13.3px;line-height:13.3px;color:#000;font-weight:400;font-style:normal;transform:scaleX(0.9445);transform-origin:0 0;">2500000000294</span>
<svg style="left:430px;top:286px;" width="6" height="6" viewBox="0 0 6 6"><polygon points="0,0 6,0 0,6" fill="#008000"/></svg>
<span style="left:771.10px;top:288.93px;font-family:'Liberation Sans',sans-serif;font-size:14.67px;line-height:14.67px;color:#000;font-weight:400;font-style:normal;transform:scale(0.9850,1.0900);transform-origin:0 12.07px;">Сумки</span>
<span style="left:894.20px;top:290.09px;font-family:'Liberation Sans',sans-serif;font-size:13.3px;line-height:13.3px;color:#000;font-weight:400;font-style:normal;transform:scaleX(0.9639);transform-origin:0 0;">Без НДС</span>
<span style="left:962.30px;top:288.93px;font-family:'Liberation Sans',sans-serif;font-size:14.67px;line-height:14.67px;color:#000;font-weight:400;font-style:normal;transform:scale(0.9850,1.0900);transform-origin:0 12.07px;">1500.00</span>
<span style="left:1019.30px;top:290.09px;font-family:'Liberation Sans',sans-serif;font-size:13.3px;line-height:13.3px;color:#000;font-weight:400;font-style:normal;transform:scaleX(1.0183);transform-origin:0 0;">Обычный товар</span>
<span style="left:28.70px;top:308.93px;font-family:'Liberation Sans',sans-serif;font-size:14.67px;line-height:14.67px;color:#000;font-weight:400;font-style:normal;transform:scale(0.9850,1.0900);transform-origin:0 12.07px;">Визитница</span>
<span style="left:255.10px;top:308.93px;font-family:'Liberation Sans',sans-serif;font-size:14.67px;line-height:14.67px;color:#000;font-weight:400;font-style:normal;transform:scale(0.9850,1.0900);transform-origin:0 12.07px;">446</span>
<span style="left:285.70px;top:308.93px;font-family:'Liberation Sans',sans-serif;font-size:14.67px;line-height:14.67px;color:#000;font-weight:400;font-style:normal;transform:scale(0.9850,1.0900);transform-origin:0 12.07px;">штука</span>
<span style="left:432.30px;top:310.09px;font-family:'Liberation Sans',sans-serif;font-size:13.3px;line-height:13.3px;color:#000;font-weight:400;font-style:normal;transform:scaleX(0.9445);transform-origin:0 0;">2500000000270</span>
<svg style="left:430px;top:306px;" width="6" height="6" viewBox="0 0 6 6"><polygon points="0,0 6,0 0,6" fill="#008000"/></svg>
<span style="left:894.20px;top:310.09px;font-family:'Liberation Sans',sans-serif;font-size:13.3px;line-height:13.3px;color:#000;font-weight:400;font-style:normal;transform:scaleX(0.9639);transform-origin:0 0;">Без НДС</span>
<span style="left:962.30px;top:308.93px;font-family:'Liberation Sans',sans-serif;font-size:14.67px;line-height:14.67px;color:#000;font-weight:400;font-style:normal;transform:scale(0.9850,1.0900);transform-origin:0 12.07px;">450.00</span>
<span style="left:1019.30px;top:310.09px;font-family:'Liberation Sans',sans-serif;font-size:13.3px;line-height:13.3px;color:#000;font-weight:400;font-style:normal;transform:scaleX(1.0183);transform-origin:0 0;">Обычный товар</span>
<span style="left:28.70px;top:328.93px;font-family:'Liberation Sans',sans-serif;font-size:14.67px;line-height:14.67px;color:#000;font-weight:400;font-style:normal;transform:scale(0.9850,1.0900);transform-origin:0 12.07px;">Брелок</span>
<span style="left:255.10px;top:328.93px;font-family:'Liberation Sans',sans-serif;font-size:14.67px;line-height:14.67px;color:#000;font-weight:400;font-style:normal;transform:scale(0.9850,1.0900);transform-origin:0 12.07px;">444</span>
<span style="left:285.70px;top:328.93px;font-family:'Liberation Sans',sans-serif;font-size:14.67px;line-height:14.67px;color:#000;font-weight:400;font-style:normal;transform:scale(0.9850,1.0900);transform-origin:0 12.07px;">штука</span>
<span style="left:432.30px;top:330.09px;font-family:'Liberation Sans',sans-serif;font-size:13.3px;line-height:13.3px;color:#000;font-weight:400;font-style:normal;transform:scaleX(0.9445);transform-origin:0 0;">2500000000279</span>
<svg style="left:430px;top:326px;" width="6" height="6" viewBox="0 0 6 6"><polygon points="0,0 6,0 0,6" fill="#008000"/></svg>
<span style="left:894.20px;top:330.09px;font-family:'Liberation Sans',sans-serif;font-size:13.3px;line-height:13.3px;color:#000;font-weight:400;font-style:normal;transform:scaleX(0.9639);transform-origin:0 0;">Без НДС</span>
<span style="left:962.30px;top:328.93px;font-family:'Liberation Sans',sans-serif;font-size:14.67px;line-height:14.67px;color:#000;font-weight:400;font-style:normal;transform:scale(0.9850,1.0900);transform-origin:0 12.07px;">150.00</span>
<span style="left:1019.30px;top:330.09px;font-family:'Liberation Sans',sans-serif;font-size:13.3px;line-height:13.3px;color:#000;font-weight:400;font-style:normal;transform:scaleX(1.0183);transform-origin:0 0;">Обычный товар</span>
<span style="left:28.70px;top:348.93px;font-family:'Liberation Sans',sans-serif;font-size:14.67px;line-height:14.67px;color:#000;font-weight:400;font-style:normal;transform:scale(0.9850,1.0900);transform-origin:0 12.07px;">Очки солнцезащитные</span>
<span style="left:255.10px;top:348.93px;font-family:'Liberation Sans',sans-serif;font-size:14.67px;line-height:14.67px;color:#000;font-weight:400;font-style:normal;transform:scale(0.9850,1.0900);transform-origin:0 12.07px;">445</span>
<span style="left:285.70px;top:348.93px;font-family:'Liberation Sans',sans-serif;font-size:14.67px;line-height:14.67px;color:#000;font-weight:400;font-style:normal;transform:scale(0.9850,1.0900);transform-origin:0 12.07px;">штука</span>
<span style="left:432.30px;top:350.09px;font-family:'Liberation Sans',sans-serif;font-size:13.3px;line-height:13.3px;color:#000;font-weight:400;font-style:normal;transform:scaleX(0.9445);transform-origin:0 0;">2500000000317</span>
<svg style="left:430px;top:346px;" width="6" height="6" viewBox="0 0 6 6"><polygon points="0,0 6,0 0,6" fill="#008000"/></svg>
<span style="left:894.20px;top:350.09px;font-family:'Liberation Sans',sans-serif;font-size:13.3px;line-height:13.3px;color:#000;font-weight:400;font-style:normal;transform:scaleX(0.9639);transform-origin:0 0;">Без НДС</span>
<span style="left:962.30px;top:348.93px;font-family:'Liberation Sans',sans-serif;font-size:14.67px;line-height:14.67px;color:#000;font-weight:400;font-style:normal;transform:scale(0.9850,1.0900);transform-origin:0 12.07px;">500.00</span>
<span style="left:1019.30px;top:350.09px;font-family:'Liberation Sans',sans-serif;font-size:13.3px;line-height:13.3px;color:#000;font-weight:400;font-style:normal;transform:scaleX(1.0183);transform-origin:0 0;">Обычный товар</span>
<span style="left:28.70px;top:368.93px;font-family:'Liberation Sans',sans-serif;font-size:14.67px;line-height:14.67px;color:#000;font-weight:400;font-style:normal;transform:scale(0.9850,1.0900);transform-origin:0 12.07px;">Варежки жен</span>
<span style="left:263.13px;top:368.93px;font-family:'Liberation Sans',sans-serif;font-size:14.67px;line-height:14.67px;color:#000;font-weight:400;font-style:normal;transform:scale(0.9850,1.0900);transform-origin:0 12.07px;">32</span>
<span style="left:285.70px;top:368.93px;font-family:'Liberation Sans',sans-serif;font-size:14.67px;line-height:14.67px;color:#000;font-weight:400;font-style:normal;transform:scale(0.9850,1.0900);transform-origin:0 12.07px;">штука</span>
<span style="left:432.30px;top:370.09px;font-family:'Liberation Sans',sans-serif;font-size:13.3px;line-height:13.3px;color:#000;font-weight:400;font-style:normal;transform:scaleX(0.9445);transform-origin:0 0;">2500000000317</span>
<svg style="left:430px;top:366px;" width="6" height="6" viewBox="0 0 6 6"><polygon points="0,0 6,0 0,6" fill="#008000"/></svg>
<span style="left:771.10px;top:368.93px;font-family:'Liberation Sans',sans-serif;font-size:14.67px;line-height:14.67px;color:#000;font-weight:400;font-style:normal;transform:scale(0.9850,1.0900);transform-origin:0 12.07px;">Аксессуары</span>
<span style="left:894.20px;top:370.09px;font-family:'Liberation Sans',sans-serif;font-size:13.3px;line-height:13.3px;color:#000;font-weight:400;font-style:normal;transform:scaleX(0.9639);transform-origin:0 0;">Без НДС</span>
<span style="left:962.30px;top:368.93px;font-family:'Liberation Sans',sans-serif;font-size:14.67px;line-height:14.67px;color:#000;font-weight:400;font-style:normal;transform:scale(0.9850,1.0900);transform-origin:0 12.07px;">350.00</span>
<span style="left:1019.30px;top:370.09px;font-family:'Liberation Sans',sans-serif;font-size:13.3px;line-height:13.3px;color:#000;font-weight:400;font-style:normal;transform:scaleX(1.0297);transform-origin:0 0;">Одежда и бельё</span>
<span style="left:28.70px;top:388.93px;font-family:'Liberation Sans',sans-serif;font-size:14.67px;line-height:14.67px;color:#000;font-weight:400;font-style:normal;transform:scale(0.9850,1.0900);transform-origin:0 12.07px;">Шапка муж</span>
<span style="left:263.13px;top:388.93px;font-family:'Liberation Sans',sans-serif;font-size:14.67px;line-height:14.67px;color:#000;font-weight:400;font-style:normal;transform:scale(0.9850,1.0900);transform-origin:0 12.07px;">31</span>
<span style="left:285.70px;top:388.93px;font-family:'Liberation Sans',sans-serif;font-size:14.67px;line-height:14.67px;color:#000;font-weight:400;font-style:normal;transform:scale(0.9850,1.0900);transform-origin:0 12.07px;">штука</span>
<span style="left:432.30px;top:390.09px;font-family:'Liberation Sans',sans-serif;font-size:13.3px;line-height:13.3px;color:#000;font-weight:400;font-style:normal;transform:scaleX(0.9445);transform-origin:0 0;">2500000000324</span>
<svg style="left:430px;top:386px;" width="6" height="6" viewBox="0 0 6 6"><polygon points="0,0 6,0 0,6" fill="#008000"/></svg>
<span style="left:771.10px;top:388.93px;font-family:'Liberation Sans',sans-serif;font-size:14.67px;line-height:14.67px;color:#000;font-weight:400;font-style:normal;transform:scale(0.9850,1.0900);transform-origin:0 12.07px;">Аксессуары</span>
<span style="left:894.20px;top:390.09px;font-family:'Liberation Sans',sans-serif;font-size:13.3px;line-height:13.3px;color:#000;font-weight:400;font-style:normal;transform:scaleX(0.9639);transform-origin:0 0;">Без НДС</span>
<span style="left:962.30px;top:388.93px;font-family:'Liberation Sans',sans-serif;font-size:14.67px;line-height:14.67px;color:#000;font-weight:400;font-style:normal;transform:scale(0.9850,1.0900);transform-origin:0 12.07px;">500.00</span>
<span style="left:1019.30px;top:390.09px;font-family:'Liberation Sans',sans-serif;font-size:13.3px;line-height:13.3px;color:#000;font-weight:400;font-style:normal;transform:scaleX(1.0297);transform-origin:0 0;">Одежда и бельё</span>
<span style="left:28.70px;top:408.93px;font-family:'Liberation Sans',sans-serif;font-size:14.67px;line-height:14.67px;color:#000;font-weight:400;font-style:normal;transform:scale(0.9850,1.0900);transform-origin:0 12.07px;">Шапка жен</span>
<span style="left:263.13px;top:408.93px;font-family:'Liberation Sans',sans-serif;font-size:14.67px;line-height:14.67px;color:#000;font-weight:400;font-style:normal;transform:scale(0.9850,1.0900);transform-origin:0 12.07px;">30</span>
<span style="left:285.70px;top:408.93px;font-family:'Liberation Sans',sans-serif;font-size:14.67px;line-height:14.67px;color:#000;font-weight:400;font-style:normal;transform:scale(0.9850,1.0900);transform-origin:0 12.07px;">штука</span>
<span style="left:432.30px;top:410.09px;font-family:'Liberation Sans',sans-serif;font-size:13.3px;line-height:13.3px;color:#000;font-weight:400;font-style:normal;transform:scaleX(0.9445);transform-origin:0 0;">2500000000331</span>
<svg style="left:430px;top:406px;" width="6" height="6" viewBox="0 0 6 6"><polygon points="0,0 6,0 0,6" fill="#008000"/></svg>
<span style="left:771.10px;top:408.93px;font-family:'Liberation Sans',sans-serif;font-size:14.67px;line-height:14.67px;color:#000;font-weight:400;font-style:normal;transform:scale(0.9850,1.0900);transform-origin:0 12.07px;">Аксессуары</span>
<span style="left:894.20px;top:410.09px;font-family:'Liberation Sans',sans-serif;font-size:13.3px;line-height:13.3px;color:#000;font-weight:400;font-style:normal;transform:scaleX(0.9639);transform-origin:0 0;">Без НДС</span>
<span style="left:962.30px;top:408.93px;font-family:'Liberation Sans',sans-serif;font-size:14.67px;line-height:14.67px;color:#000;font-weight:400;font-style:normal;transform:scale(0.9850,1.0900);transform-origin:0 12.07px;">500.00</span>
<span style="left:1019.30px;top:410.09px;font-family:'Liberation Sans',sans-serif;font-size:13.3px;line-height:13.3px;color:#000;font-weight:400;font-style:normal;transform:scaleX(1.0297);transform-origin:0 0;">Одежда и бельё</span>
<span style="left:28.70px;top:428.93px;font-family:'Liberation Sans',sans-serif;font-size:14.67px;line-height:14.67px;color:#000;font-weight:400;font-style:normal;transform:scale(0.9850,1.0900);transform-origin:0 12.07px;">Кошелек жен</span>
<span style="left:263.13px;top:428.93px;font-family:'Liberation Sans',sans-serif;font-size:14.67px;line-height:14.67px;color:#000;font-weight:400;font-style:normal;transform:scale(0.9850,1.0900);transform-origin:0 12.07px;">29</span>
<span style="left:285.70px;top:428.93px;font-family:'Liberation Sans',sans-serif;font-size:14.67px;line-height:14.67px;color:#000;font-weight:400;font-style:normal;transform:scale(0.9850,1.0900);transform-origin:0 12.07px;">штука</span>
<span style="left:432.30px;top:430.09px;font-family:'Liberation Sans',sans-serif;font-size:13.3px;line-height:13.3px;color:#000;font-weight:400;font-style:normal;transform:scaleX(0.9445);transform-origin:0 0;">2500000000332</span>
<svg style="left:430px;top:426px;" width="6" height="6" viewBox="0 0 6 6"><polygon points="0,0 6,0 0,6" fill="#008000"/></svg>
<span style="left:771.10px;top:428.93px;font-family:'Liberation Sans',sans-serif;font-size:14.67px;line-height:14.67px;color:#000;font-weight:400;font-style:normal;transform:scale(0.9850,1.0900);transform-origin:0 12.07px;">Аксессуары</span>
<span style="left:894.20px;top:430.09px;font-family:'Liberation Sans',sans-serif;font-size:13.3px;line-height:13.3px;color:#000;font-weight:400;font-style:normal;transform:scaleX(0.9639);transform-origin:0 0;">Без НДС</span>
<span style="left:962.30px;top:428.93px;font-family:'Liberation Sans',sans-serif;font-size:14.67px;line-height:14.67px;color:#000;font-weight:400;font-style:normal;transform:scale(0.9850,1.0900);transform-origin:0 12.07px;">350.00</span>
<span style="left:1019.30px;top:430.09px;font-family:'Liberation Sans',sans-serif;font-size:13.3px;line-height:13.3px;color:#000;font-weight:400;font-style:normal;transform:scaleX(1.0183);transform-origin:0 0;">Обычный товар</span>
<span style="left:28.70px;top:447.93px;font-family:'Liberation Sans',sans-serif;font-size:14.67px;line-height:14.67px;color:#000;font-weight:400;font-style:normal;transform:scale(0.9850,1.0900);transform-origin:0 12.07px;">Перчатки муж</span>
<span style="left:263.13px;top:447.93px;font-family:'Liberation Sans',sans-serif;font-size:14.67px;line-height:14.67px;color:#000;font-weight:400;font-style:normal;transform:scale(0.9850,1.0900);transform-origin:0 12.07px;">28</span>
<span style="left:285.70px;top:447.93px;font-family:'Liberation Sans',sans-serif;font-size:14.67px;line-height:14.67px;color:#000;font-weight:400;font-style:normal;transform:scale(0.9850,1.0900);transform-origin:0 12.07px;">штука</span>
<span style="left:432.30px;top:447.93px;font-family:'Liberation Sans',sans-serif;font-size:14.67px;line-height:14.67px;color:#000;font-weight:400;font-style:normal;transform:scale(0.9850,1.0900);transform-origin:0 12.07px;">2500000000362</span>
<svg style="left:430px;top:446px;" width="6" height="6" viewBox="0 0 6 6"><polygon points="0,0 6,0 0,6" fill="#008000"/></svg>
<span style="left:771.10px;top:447.93px;font-family:'Liberation Sans',sans-serif;font-size:14.67px;line-height:14.67px;color:#000;font-weight:400;font-style:normal;transform:scale(0.9850,1.0900);transform-origin:0 12.07px;">Аксессуары</span>
<span style="left:894.20px;top:449.09px;font-family:'Liberation Sans',sans-serif;font-size:13.3px;line-height:13.3px;color:#000;font-weight:400;font-style:normal;transform:scaleX(0.9639);transform-origin:0 0;">Без НДС</span>
<span style="left:962.30px;top:447.93px;font-family:'Liberation Sans',sans-serif;font-size:14.67px;line-height:14.67px;color:#000;font-weight:400;font-style:normal;transform:scale(0.9850,1.0900);transform-origin:0 12.07px;">450.00</span>
<span style="left:1019.30px;top:449.09px;font-family:'Liberation Sans',sans-serif;font-size:13.3px;line-height:13.3px;color:#000;font-weight:400;font-style:normal;transform:scaleX(1.0183);transform-origin:0 0;">Обычный товар</span>
<span style="left:28.70px;top:466.93px;font-family:'Liberation Sans',sans-serif;font-size:14.67px;line-height:14.67px;color:#000;font-weight:400;font-style:normal;transform:scale(0.9850,1.0900);transform-origin:0 12.07px;">Ремень женский</span>
<span style="left:263.13px;top:466.93px;font-family:'Liberation Sans',sans-serif;font-size:14.67px;line-height:14.67px;color:#000;font-weight:400;font-style:normal;transform:scale(0.9850,1.0900);transform-origin:0 12.07px;">27</span>
<span style="left:285.70px;top:466.93px;font-family:'Liberation Sans',sans-serif;font-size:14.67px;line-height:14.67px;color:#000;font-weight:400;font-style:normal;transform:scale(0.9850,1.0900);transform-origin:0 12.07px;">штука</span>
<span style="left:432.30px;top:466.93px;font-family:'Liberation Sans',sans-serif;font-size:14.67px;line-height:14.67px;color:#000;font-weight:400;font-style:normal;transform:scale(0.9850,1.0900);transform-origin:0 12.07px;">2500000000355</span>
<svg style="left:430px;top:465px;" width="6" height="6" viewBox="0 0 6 6"><polygon points="0,0 6,0 0,6" fill="#008000"/></svg>
<span style="left:771.10px;top:466.93px;font-family:'Liberation Sans',sans-serif;font-size:14.67px;line-height:14.67px;color:#000;font-weight:400;font-style:normal;transform:scale(0.9850,1.0900);transform-origin:0 12.07px;">Аксессуары</span>
<span style="left:894.20px;top:468.09px;font-family:'Liberation Sans',sans-serif;font-size:13.3px;line-height:13.3px;color:#000;font-weight:400;font-style:normal;transform:scaleX(0.9639);transform-origin:0 0;">Без НДС</span>
<span style="left:962.30px;top:466.93px;font-family:'Liberation Sans',sans-serif;font-size:14.67px;line-height:14.67px;color:#000;font-weight:400;font-style:normal;transform:scale(0.9850,1.0900);transform-origin:0 12.07px;">800.00</span>
<span style="left:1019.30px;top:468.09px;font-family:'Liberation Sans',sans-serif;font-size:13.3px;line-height:13.3px;color:#000;font-weight:400;font-style:normal;transform:scaleX(1.0183);transform-origin:0 0;">Обычный товар</span>
<span style="left:28.70px;top:485.93px;font-family:'Liberation Sans',sans-serif;font-size:14.67px;line-height:14.67px;color:#000;font-weight:400;font-style:normal;transform:scale(0.9850,1.0900);transform-origin:0 12.07px;">Носки Черные</span>
<span style="left:263.13px;top:485.93px;font-family:'Liberation Sans',sans-serif;font-size:14.67px;line-height:14.67px;color:#000;font-weight:400;font-style:normal;transform:scale(0.9850,1.0900);transform-origin:0 12.07px;">25</span>
<span style="left:285.70px;top:485.93px;font-family:'Liberation Sans',sans-serif;font-size:14.67px;line-height:14.67px;color:#000;font-weight:400;font-style:normal;transform:scale(0.9850,1.0900);transform-origin:0 12.07px;">штука</span>
<span style="left:432.30px;top:485.93px;font-family:'Liberation Sans',sans-serif;font-size:14.67px;line-height:14.67px;color:#000;font-weight:400;font-style:normal;transform:scale(0.9850,1.0900);transform-origin:0 12.07px;">2500000000409</span>
<svg style="left:430px;top:484px;" width="6" height="6" viewBox="0 0 6 6"><polygon points="0,0 6,0 0,6" fill="#008000"/></svg>
<span style="left:771.10px;top:485.93px;font-family:'Liberation Sans',sans-serif;font-size:14.67px;line-height:14.67px;color:#000;font-weight:400;font-style:normal;transform:scale(0.9850,1.0900);transform-origin:0 12.07px;">Аксессуары</span>
<span style="left:894.20px;top:487.09px;font-family:'Liberation Sans',sans-serif;font-size:13.3px;line-height:13.3px;color:#000;font-weight:400;font-style:normal;transform:scaleX(0.9639);transform-origin:0 0;">Без НДС</span>
<span style="left:962.30px;top:485.93px;font-family:'Liberation Sans',sans-serif;font-size:14.67px;line-height:14.67px;color:#000;font-weight:400;font-style:normal;transform:scale(0.9850,1.0900);transform-origin:0 12.07px;">300.00</span>
<span style="left:1019.30px;top:487.09px;font-family:'Liberation Sans',sans-serif;font-size:13.3px;line-height:13.3px;color:#000;font-weight:400;font-style:normal;transform:scaleX(1.0297);transform-origin:0 0;">Одежда и бельё</span>
<span style="left:28.70px;top:504.93px;font-family:'Liberation Sans',sans-serif;font-size:14.67px;line-height:14.67px;color:#000;font-weight:400;font-style:normal;transform:scale(0.9850,1.0900);transform-origin:0 12.07px;">Носки Белые</span>
<span style="left:263.13px;top:504.93px;font-family:'Liberation Sans',sans-serif;font-size:14.67px;line-height:14.67px;color:#000;font-weight:400;font-style:normal;transform:scale(0.9850,1.0900);transform-origin:0 12.07px;">23</span>
<span style="left:285.70px;top:504.93px;font-family:'Liberation Sans',sans-serif;font-size:14.67px;line-height:14.67px;color:#000;font-weight:400;font-style:normal;transform:scale(0.9850,1.0900);transform-origin:0 12.07px;">штука</span>
<span style="left:432.30px;top:504.93px;font-family:'Liberation Sans',sans-serif;font-size:14.67px;line-height:14.67px;color:#000;font-weight:400;font-style:normal;transform:scale(0.9850,1.0900);transform-origin:0 12.07px;">2500000000386</span>
<svg style="left:430px;top:503px;" width="6" height="6" viewBox="0 0 6 6"><polygon points="0,0 6,0 0,6" fill="#008000"/></svg>
<span style="left:771.10px;top:504.93px;font-family:'Liberation Sans',sans-serif;font-size:14.67px;line-height:14.67px;color:#000;font-weight:400;font-style:normal;transform:scale(0.9850,1.0900);transform-origin:0 12.07px;">Аксессуары</span>
<span style="left:894.20px;top:506.09px;font-family:'Liberation Sans',sans-serif;font-size:13.3px;line-height:13.3px;color:#000;font-weight:400;font-style:normal;transform:scaleX(0.9639);transform-origin:0 0;">Без НДС</span>
<span style="left:962.30px;top:504.93px;font-family:'Liberation Sans',sans-serif;font-size:14.67px;line-height:14.67px;color:#000;font-weight:400;font-style:normal;transform:scale(0.9850,1.0900);transform-origin:0 12.07px;">350.00</span>
<span style="left:1019.30px;top:506.09px;font-family:'Liberation Sans',sans-serif;font-size:13.3px;line-height:13.3px;color:#000;font-weight:400;font-style:normal;transform:scaleX(1.0297);transform-origin:0 0;">Одежда и бельё</span>
<span style="left:28.70px;top:523.93px;font-family:'Liberation Sans',sans-serif;font-size:14.67px;line-height:14.67px;color:#000;font-weight:400;font-style:normal;transform:scale(0.9850,1.0900);transform-origin:0 12.07px;">Ремень Черный</span>
<span style="left:271.17px;top:523.93px;font-family:'Liberation Sans',sans-serif;font-size:14.67px;line-height:14.67px;color:#000;font-weight:400;font-style:normal;transform:scale(0.9850,1.0900);transform-origin:0 12.07px;">8</span>
<span style="left:285.70px;top:523.93px;font-family:'Liberation Sans',sans-serif;font-size:14.67px;line-height:14.67px;color:#000;font-weight:400;font-style:normal;transform:scale(0.9850,1.0900);transform-origin:0 12.07px;">штука</span>
<span style="left:432.30px;top:523.93px;font-family:'Liberation Sans',sans-serif;font-size:14.67px;line-height:14.67px;color:#000;font-weight:400;font-style:normal;transform:scale(0.9850,1.0900);transform-origin:0 12.07px;">2500000000393</span>
<svg style="left:430px;top:522px;" width="6" height="6" viewBox="0 0 6 6"><polygon points="0,0 6,0 0,6" fill="#008000"/></svg>
<span style="left:771.10px;top:523.93px;font-family:'Liberation Sans',sans-serif;font-size:14.67px;line-height:14.67px;color:#000;font-weight:400;font-style:normal;transform:scale(0.9850,1.0900);transform-origin:0 12.07px;">Аксессуары</span>
<span style="left:894.20px;top:525.10px;font-family:'Liberation Sans',sans-serif;font-size:13.3px;line-height:13.3px;color:#000;font-weight:400;font-style:normal;transform:scaleX(0.9639);transform-origin:0 0;">Без НДС</span>
<span style="left:962.30px;top:523.93px;font-family:'Liberation Sans',sans-serif;font-size:14.67px;line-height:14.67px;color:#000;font-weight:400;font-style:normal;transform:scale(0.9850,1.0900);transform-origin:0 12.07px;">1000.00</span>
<span style="left:1019.30px;top:525.10px;font-family:'Liberation Sans',sans-serif;font-size:13.3px;line-height:13.3px;color:#000;font-weight:400;font-style:normal;transform:scaleX(1.0297);transform-origin:0 0;">Одежда и бельё</span>
<span style="left:28.70px;top:542.93px;font-family:'Liberation Sans',sans-serif;font-size:14.67px;line-height:14.67px;color:#000;font-weight:400;font-style:normal;transform:scale(0.9850,1.0900);transform-origin:0 12.07px;">Брюки синие муж</span>
<span style="left:263.13px;top:542.93px;font-family:'Liberation Sans',sans-serif;font-size:14.67px;line-height:14.67px;color:#000;font-weight:400;font-style:normal;transform:scale(0.9850,1.0900);transform-origin:0 12.07px;">35</span>
<span style="left:285.70px;top:542.93px;font-family:'Liberation Sans',sans-serif;font-size:14.67px;line-height:14.67px;color:#000;font-weight:400;font-style:normal;transform:scale(0.9850,1.0900);transform-origin:0 12.07px;">штука</span>
<span style="left:432.30px;top:542.93px;font-family:'Liberation Sans',sans-serif;font-size:14.67px;line-height:14.67px;color:#000;font-weight:400;font-style:normal;transform:scale(0.9850,1.0900);transform-origin:0 12.07px;">2500000000119</span>
<svg style="left:430px;top:541px;" width="6" height="6" viewBox="0 0 6 6"><polygon points="0,0 6,0 0,6" fill="#008000"/></svg>
<span style="left:771.10px;top:542.93px;font-family:'Liberation Sans',sans-serif;font-size:14.67px;line-height:14.67px;color:#000;font-weight:400;font-style:normal;transform:scale(0.9850,1.0900);transform-origin:0 12.07px;">Брюки</span>
<span style="left:894.20px;top:544.10px;font-family:'Liberation Sans',sans-serif;font-size:13.3px;line-height:13.3px;color:#000;font-weight:400;font-style:normal;transform:scaleX(0.9639);transform-origin:0 0;">Без НДС</span>
<span style="left:962.30px;top:542.93px;font-family:'Liberation Sans',sans-serif;font-size:14.67px;line-height:14.67px;color:#000;font-weight:400;font-style:normal;transform:scale(0.9850,1.0900);transform-origin:0 12.07px;">2000.00</span>
<span style="left:1019.30px;top:544.10px;font-family:'Liberation Sans',sans-serif;font-size:13.3px;line-height:13.3px;color:#000;font-weight:400;font-style:normal;transform:scaleX(1.0297);transform-origin:0 0;">Одежда и бельё</span>
<span style="left:28.70px;top:561.93px;font-family:'Liberation Sans',sans-serif;font-size:14.67px;line-height:14.67px;color:#000;font-weight:400;font-style:normal;transform:scale(0.9850,1.0900);transform-origin:0 12.07px;">Брюки бежевые жен</span>
<span style="left:263.13px;top:561.93px;font-family:'Liberation Sans',sans-serif;font-size:14.67px;line-height:14.67px;color:#000;font-weight:400;font-style:normal;transform:scale(0.9850,1.0900);transform-origin:0 12.07px;">34</span>
<span style="left:285.70px;top:561.93px;font-family:'Liberation Sans',sans-serif;font-size:14.67px;line-height:14.67px;color:#000;font-weight:400;font-style:normal;transform:scale(0.9850,1.0900);transform-origin:0 12.07px;">штука</span>
<span style="left:432.30px;top:561.93px;font-family:'Liberation Sans',sans-serif;font-size:14.67px;line-height:14.67px;color:#000;font-weight:400;font-style:normal;transform:scale(0.9850,1.0900);transform-origin:0 12.07px;">2500000000102</span>
<svg style="left:430px;top:560px;" width="6" height="6" viewBox="0 0 6 6"><polygon points="0,0 6,0 0,6" fill="#008000"/></svg>
<span style="left:771.10px;top:561.93px;font-family:'Liberation Sans',sans-serif;font-size:14.67px;line-height:14.67px;color:#000;font-weight:400;font-style:normal;transform:scale(0.9850,1.0900);transform-origin:0 12.07px;">Брюки</span>
<span style="left:894.20px;top:563.10px;font-family:'Liberation Sans',sans-serif;font-size:13.3px;line-height:13.3px;color:#000;font-weight:400;font-style:normal;transform:scaleX(0.9639);transform-origin:0 0;">Без НДС</span>
<span style="left:962.30px;top:561.93px;font-family:'Liberation Sans',sans-serif;font-size:14.67px;line-height:14.67px;color:#000;font-weight:400;font-style:normal;transform:scale(0.9850,1.0900);transform-origin:0 12.07px;">1600.00</span>
<span style="left:1019.30px;top:563.10px;font-family:'Liberation Sans',sans-serif;font-size:13.3px;line-height:13.3px;color:#000;font-weight:400;font-style:normal;transform:scaleX(1.0297);transform-origin:0 0;">Одежда и бельё</span>
<span style="left:28.70px;top:580.93px;font-family:'Liberation Sans',sans-serif;font-size:14.67px;line-height:14.67px;color:#000;font-weight:400;font-style:normal;transform:scale(0.9850,1.0900);transform-origin:0 12.07px;">Брюки черные жен</span>
<span style="left:263.13px;top:580.93px;font-family:'Liberation Sans',sans-serif;font-size:14.67px;line-height:14.67px;color:#000;font-weight:400;font-style:normal;transform:scale(0.9850,1.0900);transform-origin:0 12.07px;">33</span>
<span style="left:285.70px;top:580.93px;font-family:'Liberation Sans',sans-serif;font-size:14.67px;line-height:14.67px;color:#000;font-weight:400;font-style:normal;transform:scale(0.9850,1.0900);transform-origin:0 12.07px;">штука</span>
<span style="left:432.30px;top:580.93px;font-family:'Liberation Sans',sans-serif;font-size:14.67px;line-height:14.67px;color:#000;font-weight:400;font-style:normal;transform:scale(0.9850,1.0900);transform-origin:0 12.07px;">2500000000096</span>
<svg style="left:430px;top:579px;" width="6" height="6" viewBox="0 0 6 6"><polygon points="0,0 6,0 0,6" fill="#008000"/></svg>
<span style="left:771.10px;top:580.93px;font-family:'Liberation Sans',sans-serif;font-size:14.67px;line-height:14.67px;color:#000;font-weight:400;font-style:normal;transform:scale(0.9850,1.0900);transform-origin:0 12.07px;">Брюки</span>
<span style="left:894.20px;top:582.10px;font-family:'Liberation Sans',sans-serif;font-size:13.3px;line-height:13.3px;color:#000;font-weight:400;font-style:normal;transform:scaleX(0.9639);transform-origin:0 0;">Без НДС</span>
<span style="left:962.30px;top:580.93px;font-family:'Liberation Sans',sans-serif;font-size:14.67px;line-height:14.67px;color:#000;font-weight:400;font-style:normal;transform:scale(0.9850,1.0900);transform-origin:0 12.07px;">1800.00</span>
<span style="left:1019.30px;top:582.10px;font-family:'Liberation Sans',sans-serif;font-size:13.3px;line-height:13.3px;color:#000;font-weight:400;font-style:normal;transform:scaleX(1.0297);transform-origin:0 0;">Одежда и бельё</span>
<span style="left:28.70px;top:600.93px;font-family:'Liberation Sans',sans-serif;font-size:14.67px;line-height:14.67px;color:#000;font-weight:400;font-style:normal;transform:scale(0.9850,1.0900);transform-origin:0 12.07px;">Брюки Серые</span>
<span style="left:263.13px;top:600.93px;font-family:'Liberation Sans',sans-serif;font-size:14.67px;line-height:14.67px;color:#000;font-weight:400;font-style:normal;transform:scale(0.9850,1.0900);transform-origin:0 12.07px;">26</span>
<span style="left:285.70px;top:600.93px;font-family:'Liberation Sans',sans-serif;font-size:14.67px;line-height:14.67px;color:#000;font-weight:400;font-style:normal;transform:scale(0.9850,1.0900);transform-origin:0 12.07px;">штука</span>
<span style="left:432.30px;top:600.93px;font-family:'Liberation Sans',sans-serif;font-size:14.67px;line-height:14.67px;color:#000;font-weight:400;font-style:normal;transform:scale(0.9850,1.0900);transform-origin:0 12.07px;">2500000000089</span>
<svg style="left:430px;top:598px;" width="6" height="6" viewBox="0 0 6 6"><polygon points="0,0 6,0 0,6" fill="#008000"/></svg>
<span style="left:771.10px;top:600.93px;font-family:'Liberation Sans',sans-serif;font-size:14.67px;line-height:14.67px;color:#000;font-weight:400;font-style:normal;transform:scale(0.9850,1.0900);transform-origin:0 12.07px;">Брюки</span>
<span style="left:894.20px;top:602.10px;font-family:'Liberation Sans',sans-serif;font-size:13.3px;line-height:13.3px;color:#000;font-weight:400;font-style:normal;transform:scaleX(0.9639);transform-origin:0 0;">Без НДС</span>
<span style="left:962.30px;top:600.93px;font-family:'Liberation Sans',sans-serif;font-size:14.67px;line-height:14.67px;color:#000;font-weight:400;font-style:normal;transform:scale(0.9850,1.0900);transform-origin:0 12.07px;">2000.00</span>
<span style="left:1019.30px;top:602.10px;font-family:'Liberation Sans',sans-serif;font-size:13.3px;line-height:13.3px;color:#000;font-weight:400;font-style:normal;transform:scaleX(1.0297);transform-origin:0 0;">Одежда и бельё</span>
<span style="left:28.70px;top:620.93px;font-family:'Liberation Sans',sans-serif;font-size:14.67px;line-height:14.67px;color:#000;font-weight:400;font-style:normal;transform:scale(0.9850,1.0900);transform-origin:0 12.07px;">Брюки Черные</span>
<span style="left:263.13px;top:620.93px;font-family:'Liberation Sans',sans-serif;font-size:14.67px;line-height:14.67px;color:#000;font-weight:400;font-style:normal;transform:scale(0.9850,1.0900);transform-origin:0 12.07px;">14</span>
<span style="left:285.70px;top:620.93px;font-family:'Liberation Sans',sans-serif;font-size:14.67px;line-height:14.67px;color:#000;font-weight:400;font-style:normal;transform:scale(0.9850,1.0900);transform-origin:0 12.07px;">штука</span>
<span style="left:432.30px;top:620.93px;font-family:'Liberation Sans',sans-serif;font-size:14.67px;line-height:14.67px;color:#000;font-weight:400;font-style:normal;transform:scale(0.9850,1.0900);transform-origin:0 12.07px;">2500000000072</span>
<svg style="left:430px;top:618px;" width="6" height="6" viewBox="0 0 6 6"><polygon points="0,0 6,0 0,6" fill="#008000"/></svg>
<span style="left:771.10px;top:620.93px;font-family:'Liberation Sans',sans-serif;font-size:14.67px;line-height:14.67px;color:#000;font-weight:400;font-style:normal;transform:scale(0.9850,1.0900);transform-origin:0 12.07px;">Брюки</span>
<span style="left:894.20px;top:622.10px;font-family:'Liberation Sans',sans-serif;font-size:13.3px;line-height:13.3px;color:#000;font-weight:400;font-style:normal;transform:scaleX(0.9639);transform-origin:0 0;">Без НДС</span>
<span style="left:962.30px;top:620.93px;font-family:'Liberation Sans',sans-serif;font-size:14.67px;line-height:14.67px;color:#000;font-weight:400;font-style:normal;transform:scale(0.9850,1.0900);transform-origin:0 12.07px;">2100.00</span>
<span style="left:1019.30px;top:622.10px;font-family:'Liberation Sans',sans-serif;font-size:13.3px;line-height:13.3px;color:#000;font-weight:400;font-style:normal;transform:scaleX(1.0297);transform-origin:0 0;">Одежда и бельё</span>
<span style="left:28.70px;top:641.93px;font-family:'Liberation Sans',sans-serif;font-size:14.67px;line-height:14.67px;color:#000;font-weight:400;font-style:normal;transform:scale(0.9850,1.0900);transform-origin:0 12.07px;">Блузка синяя жен</span>
<span style="left:263.13px;top:641.93px;font-family:'Liberation Sans',sans-serif;font-size:14.67px;line-height:14.67px;color:#000;font-weight:400;font-style:normal;transform:scale(0.9850,1.0900);transform-origin:0 12.07px;">37</span>
<span style="left:285.70px;top:641.93px;font-family:'Liberation Sans',sans-serif;font-size:14.67px;line-height:14.67px;color:#000;font-weight:400;font-style:normal;transform:scale(0.9850,1.0900);transform-origin:0 12.07px;">штука</span>
<span style="left:432.30px;top:641.93px;font-family:'Liberation Sans',sans-serif;font-size:14.67px;line-height:14.67px;color:#000;font-weight:400;font-style:normal;transform:scale(0.9850,1.0900);transform-origin:0 12.07px;">2500000000065</span>
<svg style="left:430px;top:638px;" width="6" height="6" viewBox="0 0 6 6"><polygon points="0,0 6,0 0,6" fill="#008000"/></svg>
<span style="left:771.10px;top:641.93px;font-family:'Liberation Sans',sans-serif;font-size:14.67px;line-height:14.67px;color:#000;font-weight:400;font-style:normal;transform:scale(0.9850,1.0900);transform-origin:0 12.07px;">Рубашки/Блузки</span>
<span style="left:894.20px;top:643.10px;font-family:'Liberation Sans',sans-serif;font-size:13.3px;line-height:13.3px;color:#000;font-weight:400;font-style:normal;transform:scaleX(0.9639);transform-origin:0 0;">Без НДС</span>
<span style="left:962.30px;top:641.93px;font-family:'Liberation Sans',sans-serif;font-size:14.67px;line-height:14.67px;color:#000;font-weight:400;font-style:normal;transform:scale(0.9850,1.0900);transform-origin:0 12.07px;">900.00</span>
<span style="left:1019.30px;top:643.10px;font-family:'Liberation Sans',sans-serif;font-size:13.3px;line-height:13.3px;color:#000;font-weight:400;font-style:normal;transform:scaleX(1.0297);transform-origin:0 0;">Одежда и бельё</span>
<span style="left:28.70px;top:662.93px;font-family:'Liberation Sans',sans-serif;font-size:14.67px;line-height:14.67px;color:#000;font-weight:400;font-style:normal;transform:scale(0.9850,1.0900);transform-origin:0 12.07px;">Блузка белая жен</span>
<span style="left:263.13px;top:662.93px;font-family:'Liberation Sans',sans-serif;font-size:14.67px;line-height:14.67px;color:#000;font-weight:400;font-style:normal;transform:scale(0.9850,1.0900);transform-origin:0 12.07px;">36</span>
<span style="left:285.70px;top:662.93px;font-family:'Liberation Sans',sans-serif;font-size:14.67px;line-height:14.67px;color:#000;font-weight:400;font-style:normal;transform:scale(0.9850,1.0900);transform-origin:0 12.07px;">штука</span>
<span style="left:432.30px;top:662.93px;font-family:'Liberation Sans',sans-serif;font-size:14.67px;line-height:14.67px;color:#000;font-weight:400;font-style:normal;transform:scale(0.9850,1.0900);transform-origin:0 12.07px;">2500000000270</span>
<svg style="left:430px;top:659px;" width="6" height="6" viewBox="0 0 6 6"><polygon points="0,0 6,0 0,6" fill="#008000"/></svg>
<span style="left:771.10px;top:662.93px;font-family:'Liberation Sans',sans-serif;font-size:14.67px;line-height:14.67px;color:#000;font-weight:400;font-style:normal;transform:scale(0.9850,1.0900);transform-origin:0 12.07px;">Рубашки/Блузки</span>
<span style="left:894.20px;top:664.10px;font-family:'Liberation Sans',sans-serif;font-size:13.3px;line-height:13.3px;color:#000;font-weight:400;font-style:normal;transform:scaleX(0.9639);transform-origin:0 0;">Без НДС</span>
<span style="left:962.30px;top:662.93px;font-family:'Liberation Sans',sans-serif;font-size:14.67px;line-height:14.67px;color:#000;font-weight:400;font-style:normal;transform:scale(0.9850,1.0900);transform-origin:0 12.07px;">800.00</span>
<span style="left:1019.30px;top:664.10px;font-family:'Liberation Sans',sans-serif;font-size:13.3px;line-height:13.3px;color:#000;font-weight:400;font-style:normal;transform:scaleX(1.0297);transform-origin:0 0;">Одежда и бельё</span>
<span style="left:28.70px;top:683.93px;font-family:'Liberation Sans',sans-serif;font-size:14.67px;line-height:14.67px;color:#000;font-weight:400;font-style:normal;transform:scale(0.9850,1.0900);transform-origin:0 12.07px;">Рубашка Белая</span>
<span style="left:285.70px;top:683.93px;font-family:'Liberation Sans',sans-serif;font-size:14.67px;line-height:14.67px;color:#000;font-weight:400;font-style:normal;transform:scale(0.9850,1.0900);transform-origin:0 12.07px;">штука</span>
<span style="left:432.30px;top:683.93px;font-family:'Liberation Sans',sans-serif;font-size:14.67px;line-height:14.67px;color:#000;font-weight:400;font-style:normal;transform:scale(0.9850,1.0900);transform-origin:0 12.07px;">2500000000256</span>
<svg style="left:430px;top:680px;" width="6" height="6" viewBox="0 0 6 6"><polygon points="0,0 6,0 0,6" fill="#008000"/></svg>
<span style="left:771.10px;top:683.93px;font-family:'Liberation Sans',sans-serif;font-size:14.67px;line-height:14.67px;color:#000;font-weight:400;font-style:normal;transform:scale(0.9850,1.0900);transform-origin:0 12.07px;">Рубашки/Блузки</span>
<span style="left:894.20px;top:685.10px;font-family:'Liberation Sans',sans-serif;font-size:13.3px;line-height:13.3px;color:#000;font-weight:400;font-style:normal;transform:scaleX(0.9639);transform-origin:0 0;">Без НДС</span>
<span style="left:962.30px;top:683.93px;font-family:'Liberation Sans',sans-serif;font-size:14.67px;line-height:14.67px;color:#000;font-weight:400;font-style:normal;transform:scale(0.9850,1.0900);transform-origin:0 12.07px;">1200.00</span>
<span style="left:1019.30px;top:685.10px;font-family:'Liberation Sans',sans-serif;font-size:13.3px;line-height:13.3px;color:#000;font-weight:400;font-style:normal;transform:scaleX(1.0297);transform-origin:0 0;">Одежда и бельё</span>
<svg style="left:430px;top:701px;" width="6" height="3" viewBox="0 0 6 3"><polygon points="0,0 6,0 3,3 0,3" fill="#008000"/></svg>
<div style="left:24px;top:244px;width:196px;height:2px;background:#217346;"></div>
<div style="left:24px;top:265px;width:191px;height:2px;background:#217346;"></div>
<div style="left:24px;top:244px;width:2px;height:23px;background:#217346;"></div>
<div style="left:218px;top:244px;width:2px;height:18px;background:#217346;"></div>
<div style="left:215px;top:262px;width:7px;height:7px;background:#fff;"></div>
<div style="left:216px;top:263px;width:5px;height:5px;background:#217346;"></div>
<div style="left:0px;top:704px;width:1317px;height:1px;background:#c6c6c6;"></div>
<div style="left:0px;top:705px;width:1317px;height:27px;background:#e6e6e6;"></div>
<div style="left:1296px;top:206px;width:21px;height:499px;background:#e6e6e6;"></div>
<div style="left:1296px;top:225px;width:1px;height:480px;background:#ababab;"></div>
<div style="left:1300px;top:208px;width:15px;height:497px;background:#dadada;"></div>
<div style="left:1300px;top:208px;width:15px;height:15px;background:#fff;border:1px solid #c6c6c6;box-sizing:border-box;"></div>
<div style="left:1300px;top:223px;width:15px;height:17px;background:#fff;border:1px solid #c6c6c6;box-sizing:border-box;"></div>
<div style="left:1300px;top:690px;width:15px;height:15px;background:#fff;border:1px solid #c6c6c6;box-sizing:border-box;"></div>
<div style="left:100px;top:704px;width:65px;height:24px;background:#fff;border-left:1px solid #c6c6c6;border-right:1px solid #c6c6c6;box-sizing:border-box;"></div>
<div style="left:100px;top:726px;width:65px;height:2px;background:#217346;"></div>
<span style="left:112.50px;top:711.94px;font-family:'Liberation Sans',sans-serif;font-size:12.3px;line-height:12.3px;color:#217346;font-weight:700;font-style:normal;letter-spacing:0.034px;">Sheet0</span>
<div style="left:808px;top:711px;width:489px;height:15px;background:#dadada;"></div>
<div style="left:808px;top:711px;width:15px;height:15px;background:#fff;border:1px solid #c6c6c6;box-sizing:border-box;"></div>
<div style="left:823px;top:711px;width:317px;height:15px;background:#fff;border:1px solid #c6c6c6;box-sizing:border-box;"></div>
<div style="left:1282px;top:711px;width:15px;height:15px;background:#fff;border:1px solid #c6c6c6;box-sizing:border-box;"></div>
<div style="left:0px;top:732px;width:1317px;height:1px;background:#d0d0d0;"></div>
<div style="left:0px;top:733px;width:1317px;height:21px;background:#f3f2f1;"></div>
<div style="left:0px;top:754px;width:1317px;height:1px;background:#217346;"></div>
<span style="left:8.50px;top:738.88px;font-family:'Liberation Sans',sans-serif;font-size:11.2px;line-height:11.2px;color:#505050;font-weight:400;font-style:normal;letter-spacing:0.391px;">Готово</span>
<span style="left:847.70px;top:738.88px;font-family:'Liberation Sans',sans-serif;font-size:11.2px;line-height:11.2px;color:#444;font-weight:400;font-style:normal;letter-spacing:0.296px;">Параметры отображения</span>
<div style="left:1004px;top:733px;width:40px;height:20px;background:#d2d0ce;"></div>
<span style="left:1269.50px;top:737.79px;font-family:'Liberation Sans',sans-serif;font-size:11.3px;line-height:11.3px;color:#555;font-weight:400;font-style:normal;letter-spacing:-0.637px;">100 %</span>
<svg style="left:0;top:0" width="1317" height="755" viewBox="0 0 1317 755"><path d="M21.5,9.5 H36.5 V24.5 H24 L21.5,22 Z" fill="none" stroke="#fff" stroke-width="1.2"/><path d="M24.5,9.5 V15.5 H33.5 V9.5 M25.5,24.5 V19.5 H32.5 V24.5" fill="none" stroke="#fff" stroke-width="1.2"/><path d="M51.5,9 V15.5 H58" fill="none" stroke="#fff" stroke-width="1.2"/><path d="M52,15 Q56,10 60,10 Q65,10.5 65,15.5 Q65,18 62.5,20.5 L56.5,25" fill="none" stroke="#fff" stroke-width="1.2"/><polyline points="71.5,14 74.5,17 77.5,14" fill="none" stroke="#fff" stroke-width="1.3"/><path d="M104,9 V15.5 H97.5" fill="none" stroke="#64a884" stroke-width="1.2"/><path d="M103.5,15 Q99.5,10 95.5,10 Q90.5,10.5 90.5,15.5 Q90.5,18 93,20.5 L99,25" fill="none" stroke="#64a884" stroke-width="1.2"/><polyline points="110.5,14 113.5,17 116.5,14" fill="none" stroke="#64a884" stroke-width="1.2"/><path d="M132,12.8 H139" stroke="#fff" stroke-width="1.2"/><polyline points="132.5,15 135.5,18 138.5,15" fill="none" stroke="#fff" stroke-width="1.3"/><circle cx="516" cy="14" r="5.2" fill="none" stroke="#1d4d33" stroke-width="1.2"/><path d="M512.3,17.8 L509.5,21.8" stroke="#1d4d33" stroke-width="1.4"/><path d="M1150.5,11 H1163 V20 H1150.5 Z M1150.5,13.2 H1163" fill="none" stroke="#fff" stroke-width="1.1"/><path d="M1156.8,19.5 V15 M1154.5,17 L1156.8,14.7 L1159.1,17" fill="none" stroke="#fff" stroke-width="1.1"/><path d="M1198,14.5 H1208" stroke="#fff" stroke-width="1.1"/><rect x="1244.5" y="11.5" width="9" height="8.5" fill="none" stroke="#fff" stroke-width="1.1"/><path d="M1290,11 L1300,20.5 M1300,11 L1290,20.5" stroke="#fff" stroke-width="1.1"/><path d="M1207.5,45 H1205.5 V54.5 H1215 V51.5" fill="none" stroke="#217346" stroke-width="1.2"/><path d="M1209,52 Q1209,46 1215.5,46 M1213.5,43.5 L1216,46 L1213.5,48.5" fill="none" stroke="#217346" stroke-width="1.2"/><path d="M95.5,155 V148.5 H102 M97.5,150.5 L102.5,155.5 M102.5,151.5 V155.5 H98.5" fill="none" stroke="#555" stroke-width="1"/><path d="M327.5,155 V148.5 H334 M329.5,150.5 L334.5,155.5 M334.5,151.5 V155.5 H330.5" fill="none" stroke="#555" stroke-width="1"/><path d="M509.5,155 V148.5 H516 M511.5,150.5 L516.5,155.5 M516.5,151.5 V155.5 H512.5" fill="none" stroke="#555" stroke-width="1"/><path d="M665.5,155 V148.5 H672 M667.5,150.5 L672.5,155.5 M672.5,151.5 V155.5 H668.5" fill="none" stroke="#555" stroke-width="1"/><rect x="23.5" y="75.5" width="20.5" height="23" fill="#f8f8f8" stroke="#e07000" stroke-width="1.1"/><rect x="25" y="77" width="17.5" height="20" fill="none" stroke="#fbd98a" stroke-width="1.6"/><path d="M27.5,78.5 V74.5 H31 Q31.3,71 33.5,71 Q35.7,71 36,74.5 H39.5 V78.5 Z" fill="#fff" stroke="#777" stroke-width="1.1"/><rect x="36.5" y="83.5" width="13" height="17" fill="#f9f9f9" stroke="#444" stroke-width="1.1"/><polyline points="30.5,125.4 33.5,128.6 36.5,125.4" fill="none" stroke="#505050" stroke-width="1.2"/><path d="M68.5,70.5 L75,82 M76,70.5 L69.5,82" stroke="#444" stroke-width="1.1" fill="none"/><circle cx="69" cy="84" r="1.9" fill="none" stroke="#1e8bd8" stroke-width="1.3"/><circle cx="75.5" cy="84" r="1.9" fill="none" stroke="#1e8bd8" stroke-width="1.3"/><path d="M72.5,97 V94.5 H64.5 V106.5 H70.5" fill="none" stroke="#333" stroke-width="1.1"/><path d="M70.5,98.5 H77 L80,101.5 V109.5 H70.5 Z" fill="#fff" stroke="#333" stroke-width="1.1"/><path d="M73,103.5 H78 M73,106 H78" stroke="#333" stroke-width="1"/><polyline points="86.7,100.2 89.7,103.39999999999999 92.7,100.2" fill="none" stroke="#505050" stroke-width="1.2"/><path d="M65,125 L71,120.5 L77.5,126.5 L71.5,132 Z" fill="#fff" stroke="#e07b10" stroke-width="1.5" stroke-linejoin="round"/><path d="M65,125 L68,122.8 L72,131 L71.5,132 Z" fill="#f08c1e"/><path d="M71.5,121.5 L75,119 L78.5,122.5 L76,125.5 Z" fill="#444"/><path d="M76.5,120.5 L80,117" stroke="#444" stroke-width="2.2" stroke-linecap="round"/><polyline points="222.2,85.80000000000001 225.2,89.0 228.2,85.80000000000001" fill="none" stroke="#505050" stroke-width="1.2"/><polyline points="273.2,85.80000000000001 276.2,89.0 279.2,85.80000000000001" fill="none" stroke="#505050" stroke-width="1.2"/><path d="M289.6,90.8 L294.4,78.2 L299.4,90.8 M291.3,86.5 H297.6" fill="none" stroke="#333" stroke-width="1.2"/><polyline points="299.5,81.6 301.8,79.2 304.1,81.6" fill="none" stroke="#1e8bd8" stroke-width="1.3"/><path d="M315.4,90.8 L319.1,81.2 L322.9,90.8 M316.7,87.5 H321.6" fill="none" stroke="#333" stroke-width="1.2"/><polyline points="323.4,79.2 325.6,81.6 327.8,79.2" fill="none" stroke="#1e8bd8" stroke-width="1.3"/><polyline points="188.6,116.7 191.6,119.89999999999999 194.6,116.7" fill="none" stroke="#505050" stroke-width="1.2"/><path d="M212.5,110.5 H227 V124.5 H212.5 Z M219.75,110.5 V124.5 M212.5,117.5 H227" fill="none" stroke="#222" stroke-width="1.3"/><polyline points="234.5,116.7 237.5,119.89999999999999 240.5,116.7" fill="none" stroke="#505050" stroke-width="1.2"/><path d="M260.6,116.4 L266.5,110.5 L271.5,115 L265.4,120.9 Z" fill="#fff" stroke="#333" stroke-width="1.1" stroke-linejoin="round"/><path d="M266.5,110.5 Q268,110 268,112 V115.5" fill="none" stroke="#333" stroke-width="1.1"/><path d="M270.2,113.6 Q272.8,114.6 271.9,119.8" fill="none" stroke="#1e6fc0" stroke-width="1.7"/><polyline points="280.5,116.7 283.5,119.89999999999999 286.5,116.7" fill="none" stroke="#505050" stroke-width="1.2"/><path d="M300.8,120.8 L305.4,110.3 L310,120.8 M302.4,117.2 H308.4" fill="none" stroke="#333" stroke-width="1.15"/><polyline points="319.3,116.7 322.3,119.89999999999999 325.3,116.7" fill="none" stroke="#505050" stroke-width="1.2"/><path d="M351,78.5 H365" stroke="#333" stroke-width="1.1"/><path d="M353,82.5 H363" stroke="#333" stroke-width="1.1"/><path d="M351,86.5 H365" stroke="#333" stroke-width="1.1"/><path d="M375,81.5 H389" stroke="#333" stroke-width="1.1"/><path d="M377,85.5 H387" stroke="#333" stroke-width="1.1"/><path d="M375,89.5 H389" stroke="#333" stroke-width="1.1"/><rect x="395.5" y="75.5" width="21" height="22" fill="#c8c6c4" stroke="#8a8886" stroke-width="1"/><path d="M399,85.5 H413" stroke="#333" stroke-width="1.1"/><path d="M401,89.5 H411" stroke="#333" stroke-width="1.1"/><path d="M399,93.5 H413" stroke="#333" stroke-width="1.1"/><text x="0" y="0" transform="translate(425,91) rotate(-45)" font-family="Liberation Sans" font-size="10.5" fill="#444">ab</text><path d="M428,92.5 L439,80 M435,80 H439 V84" fill="none" stroke="#1e8bd8" stroke-width="1.2"/><polyline points="443.3,84.4 446.3,87.6 449.3,84.4" fill="none" stroke="#505050" stroke-width="1.2"/><path d="M351,111.5 H365" stroke="#333" stroke-width="1.1"/><path d="M351,115.5 H360" stroke="#333" stroke-width="1.1"/><path d="M351,119.5 H365" stroke="#333" stroke-width="1.1"/><path d="M351,123.5 H360" stroke="#333" stroke-width="1.1"/><path d="M375,111.5 H389" stroke="#333" stroke-width="1.1"/><path d="M377,115.5 H387" stroke="#333" stroke-width="1.1"/><path d="M375,119.5 H389" stroke="#333" stroke-width="1.1"/><path d="M377,123.5 H387" stroke="#333" stroke-width="1.1"/><path d="M399,111.5 H413" stroke="#333" stroke-width="1.1"/><path d="M404,115.5 H413" stroke="#333" stroke-width="1.1"/><path d="M399,119.5 H413" stroke="#333" stroke-width="1.1"/><path d="M404,123.5 H413" stroke="#333" stroke-width="1.1"/><path d="M424,111.5 H438" stroke="#333" stroke-width="1.1"/><path d="M431,115.5 H438" stroke="#333" stroke-width="1.1"/><path d="M431,119.5 H438" stroke="#333" stroke-width="1.1"/><path d="M424,123.5 H438" stroke="#333" stroke-width="1.1"/><path d="M430,117.5 H424.5 M427,115 L424.5,117.5 L427,120" fill="none" stroke="#1e8bd8" stroke-width="1.2"/><path d="M448,111.5 H462" stroke="#333" stroke-width="1.1"/><path d="M455,115.5 H462" stroke="#333" stroke-width="1.1"/><path d="M455,119.5 H462" stroke="#333" stroke-width="1.1"/><path d="M448,123.5 H462" stroke="#333" stroke-width="1.1"/><path d="M448,117.5 H454 M451.5,115 L454,117.5 L451.5,120" fill="none" stroke="#1e8bd8" stroke-width="1.2"/><path d="M493.5,85.5 Q495.5,90 490,90.5 H486.5 M488.5,88.5 L486.5,90.5 L488.5,92.5" fill="none" stroke="#1e8bd8" stroke-width="1.2"/><rect x="478.5" y="110.5" width="14" height="14" fill="#fff" stroke="#222" stroke-width="1.1"/><path d="M478.5,113.5 H492.5 M478.5,121.5 H492.5 M485.5,110.5 V113.5 M485.5,121.5 V124.5" stroke="#222" stroke-width="1"/><rect x="478.5" y="113.5" width="14" height="8" fill="none" stroke="#1e8bd8" stroke-width="1.2"/><path d="M481,117.5 H490 M483,115.5 L481,117.5 L483,119.5 M488,115.5 L490,117.5 L488,119.5" fill="none" stroke="#1e8bd8" stroke-width="1.1"/><polyline points="500.5,116.7 503.5,119.89999999999999 506.5,116.7" fill="none" stroke="#505050" stroke-width="1.2"/><polyline points="659.2,85.80000000000001 662.2,89.0 665.2,85.80000000000001" fill="none" stroke="#505050" stroke-width="1.2"/><path d="M532.5,113.5 H547.5 V122.5 H532.5 Z" fill="#fff" stroke="#333" stroke-width="1.1"/><path d="M538,116.5 H535.5 V120 H538 M542.5,116.5 H540 V120 H542.5" fill="none" stroke="#333" stroke-width="1"/><path d="M540.5,118.5 h7 v6.5 q-3.5,1.2 -7,0 z" fill="#fff" stroke="#e07b10" stroke-width="1.2"/><ellipse cx="544" cy="118.5" rx="3.5" ry="1.2" fill="#fff" stroke="#e07b10" stroke-width="1.1"/><path d="M540.5,121.6 q3.5,1.2 7,0" fill="none" stroke="#e07b10" stroke-width="1"/><polyline points="554.5,116.7 557.5,119.89999999999999 560.5,116.7" fill="none" stroke="#505050" stroke-width="1.2"/><path d="M585,111 L573,125.2" stroke="#333" stroke-width="1.2"/><circle cx="574.6" cy="114.2" r="2.7" fill="none" stroke="#333" stroke-width="1.2"/><circle cx="583.2" cy="122.2" r="2.7" fill="none" stroke="#333" stroke-width="1.2"/><ellipse cx="597.4" cy="117.4" rx="2.1" ry="3.4" fill="none" stroke="#777" stroke-width="1.1"/><ellipse cx="602.6" cy="117.4" rx="2.1" ry="3.4" fill="none" stroke="#777" stroke-width="1.1"/><ellipse cx="607.8" cy="117.4" rx="2.1" ry="3.4" fill="none" stroke="#777" stroke-width="1.1"/><path d="M634,114.5 H626.5 M629.5,111.8 L626.5,114.5 L629.5,117.2" fill="none" stroke="#1e8bd8" stroke-width="1.2"/><path d="M650,121.5 H657.5 M654.5,118.8 L657.5,121.5 L654.5,124.2" fill="none" stroke="#1e8bd8" stroke-width="1.2"/><rect x="727.5" y="74.5" width="27" height="21" fill="#fff" stroke="#333" stroke-width="1.1"/><path d="M744.5,74.5 V95.5 M749.5,74.5 V95.5 M727.5,81.5 H754.5 M727.5,88.5 H754.5 M732.5,74.5 V95.5" fill="none" stroke="#333" stroke-width="1"/><rect x="732.5" y="74.5" width="12" height="7" fill="#f7a1a8" stroke="#e0303a" stroke-width="1.1"/><rect x="732.5" y="88.5" width="14" height="7" fill="#f7a1a8" stroke="#e0303a" stroke-width="1.1"/><rect x="732.5" y="81.5" width="8" height="7" fill="#8ec1ef" stroke="#1e6fc0" stroke-width="1.1"/><polyline points="786.5,126.55000000000001 789.5,130.05 792.5,126.55000000000001" fill="none" stroke="#505050" stroke-width="1.2"/><rect x="829.5" y="74.5" width="27" height="21" fill="#fff" stroke="#333" stroke-width="1.1"/><rect x="838.5" y="81.5" width="18" height="14" fill="#8ec1ef" stroke="#1e6fc0" stroke-width="1.1"/><path d="M829.5,81.5 H838.5 M829.5,88.5 H856.5 M838.5,74.5 V95.5 M847.5,74.5 V95.5" fill="none" stroke="#333" stroke-width="1"/><path d="M838.5,88.5 H856.5 M847.5,81.5 V95.5" fill="none" stroke="#1e6fc0" stroke-width="1"/><g transform="translate(847,93) rotate(-45)"><rect x="0" y="-2.4" width="17" height="4.8" rx="2.4" fill="#fff" stroke="#444" stroke-width="1.1"/></g><path d="M848.5,94 Q849,98.5 844.5,100.5 Q840.5,102 837,101 Q840.5,99.5 841,96 Q842,91.5 846,91.5 Z" fill="#3f8fd8" stroke="#1e6fc0" stroke-width="0.8"/><polyline points="873.5,126.75 876.5,130.25 879.5,126.75" fill="none" stroke="#505050" stroke-width="1.2"/><rect x="898.5" y="74.5" width="27" height="21" fill="#fff" stroke="#333" stroke-width="1.1"/><path d="M898.5,79.5 H925.5 M898.5,90.5 H925.5 M903.5,74.5 V95.5 M920.5,74.5 V95.5" fill="none" stroke="#333" stroke-width="1"/><rect x="903.5" y="79.5" width="17" height="11" fill="#8ec1ef" stroke="#1e6fc0" stroke-width="1.1"/><g transform="translate(916,93) rotate(-45)"><rect x="0" y="-2.4" width="17" height="4.8" rx="2.4" fill="#fff" stroke="#444" stroke-width="1.1"/></g><path d="M917.5,94 Q918,98.5 913.5,100.5 Q909.5,102 906,101 Q909.5,99.5 910,96 Q911,91.5 915,91.5 Z" fill="#3f8fd8" stroke="#1e6fc0" stroke-width="0.8"/><polyline points="925.5,126.75 928.5,130.25 931.5,126.75" fill="none" stroke="#505050" stroke-width="1.2"/><rect x="955.5" y="70.5" width="15" height="13" fill="#fff" stroke="#333" stroke-width="1.1"/><path d="M955.5,74.5 H970.5 M955.5,79 H970.5 M960.5,70.5 V83.5 M965.5,70.5 V83.5" fill="none" stroke="#333" stroke-width="1"/><rect x="960.5" y="74.5" width="10" height="5" fill="#7fb6e8" stroke="#1e6fc0"/><path d="M963,77 H955.5 M958,74.5 L955.5,77 L958,79.5" fill="none" stroke="#1e8bd8" stroke-width="1.3"/><polyline points="1032.3,75.80000000000001 1035.3,79.0 1038.3,75.80000000000001" fill="none" stroke="#505050" stroke-width="1.2"/><rect x="955.5" y="93.5" width="15" height="13" fill="#fff" stroke="#333" stroke-width="1.1"/><path d="M955.5,97.5 H970.5 M955.5,102 H970.5 M960.5,93.5 V106.5 M965.5,93.5 V106.5" fill="none" stroke="#333" stroke-width="1"/><rect x="958.5" y="97.5" width="6" height="5" fill="#7fb6e8" stroke="#1e6fc0"/><path d="M966,96.5 L971,102.5 M971,96.5 L966,102.5" stroke="#e81123" stroke-width="1.2"/><polyline points="1028.5,98.2 1031.5,101.39999999999999 1034.5,98.2" fill="none" stroke="#505050" stroke-width="1.2"/><rect x="955.5" y="117.5" width="15" height="13" fill="#fff" stroke="#333" stroke-width="1.1"/><path d="M955.5,121.5 H970.5 M955.5,126 H970.5 M960.5,117.5 V130.5 M965.5,117.5 V130.5" fill="none" stroke="#333" stroke-width="1"/><rect x="959.5" y="121.5" width="7" height="5" fill="#7fb6e8" stroke="#1e6fc0"/><path d="M957.5,115.5 H968.5 M957.5,114 V117 M968.5,114 V117" stroke="#1e8bd8" stroke-width="1"/><polyline points="1020.5,122.0 1023.5,125.19999999999999 1026.5,122.0" fill="none" stroke="#505050" stroke-width="1.2"/><path d="M1078,72.5 H1066.5 L1072.5,77.5 L1066.5,82.5 H1078" fill="none" stroke="#333" stroke-width="1.2"/><polyline points="1086.5,75.80000000000001 1089.5,79.0 1092.5,75.80000000000001" fill="none" stroke="#505050" stroke-width="1.2"/><rect x="1064.5" y="93.5" width="15" height="13" fill="#fff" stroke="#333" stroke-width="1.1"/><path d="M1064.5,96.5 H1079.5" stroke="#333" stroke-width="1"/><path d="M1072,98.5 V104 M1069.5,101.5 L1072,104 L1074.5,101.5" fill="none" stroke="#1e8bd8" stroke-width="1.2"/><polyline points="1084.5,98.60000000000001 1087.5,101.8 1090.5,98.60000000000001" fill="none" stroke="#505050" stroke-width="1.2"/><path d="M1064.8,123 L1072,115.8 L1079.2,123 L1072,130.2 Z" fill="#fff" stroke="#a64ac9" stroke-width="1.2"/><path d="M1064.8,123 L1068.4,119.4 L1075.6,126.6 L1072,130.2 Z" fill="#c27ade" stroke="#a64ac9" stroke-width="1.2"/><polyline points="1084.5,121.60000000000001 1087.5,124.8 1090.5,121.60000000000001" fill="none" stroke="#505050" stroke-width="1.2"/><path d="M1132.5,78.5 H1148 L1142.5,85 V93 H1138 V85 Z" fill="#fff" stroke="#333" stroke-width="1.2" stroke-linejoin="round"/><polyline points="1157.5,126.75 1160.5,130.25 1163.5,126.75" fill="none" stroke="#505050" stroke-width="1.2"/><circle cx="1207.7" cy="81.2" r="10" fill="#fff" stroke="#333" stroke-width="1.3"/><path d="M1200.5,88.5 L1189.5,99.5" stroke="#333" stroke-width="1.3"/><polyline points="1226.5,126.75 1229.5,130.25 1232.5,126.75" fill="none" stroke="#505050" stroke-width="1.2"/><polyline points="1299.5,155 1304.5,150.5 1309.5,155" fill="none" stroke="#444" stroke-width="1.2"/><polygon points="90.5,180.5 98.5,180.5 94.5,184.5" fill="#777"/><rect x="121" y="179" width="2" height="2" fill="#9a9a9a"/><rect x="121" y="183.5" width="2" height="2" fill="#9a9a9a"/><rect x="121" y="188" width="2" height="2" fill="#9a9a9a"/><path d="M151,177.5 L161,187.5 M161,177.5 L151,187.5" stroke="#b8b8b8" stroke-width="1.3"/><path d="M185.5,182.5 L190.5,187.5 L199,177.5" fill="none" stroke="#c2c2c2" stroke-width="1.8"/><polyline points="1301,180.5 1304.5,184 1308,180.5" fill="none" stroke="#555" stroke-width="1.8"/><polygon points="1303.5,217.5 1311.5,217.5 1307.5,213" fill="#666"/><polygon points="1303.5,695.5 1311.5,695.5 1307.5,700" fill="#666"/><polygon points="31,713.8 31,721.2 27,717.5" fill="#c2c2c2"/><polygon points="55,713.8 55,721.2 59,717.5" fill="#c2c2c2"/><circle cx="205.7" cy="717.8" r="7.5" fill="none" stroke="#c2c2c2" stroke-width="1.1"/><path d="M201.5,717.8 H210 M205.7,713.6 V722" stroke="#c2c2c2" stroke-width="1.3"/><rect x="791" y="714" width="2" height="1.6" fill="#a8a8a8"/><rect x="791" y="718" width="2" height="1.6" fill="#a8a8a8"/><rect x="791" y="722" width="2" height="1.6" fill="#a8a8a8"/><polygon points="818,714.5 818,722.5 813.5,718.5" fill="#666"/><polygon points="1287,714.5 1287,722.5 1291.5,718.5" fill="#666"/><path d="M66.5,737.5 H79.5 V740.5 H66.5 Z M66.5,740.5 V749.5 H70.5" fill="none" stroke="#444" stroke-width="1"/><path d="M68,743 H71 M68,745.5 H71 M68,748 H71" stroke="#444" stroke-width="1"/><circle cx="75.5" cy="746" r="3.3" fill="none" stroke="#444" stroke-width="1.1"/><circle cx="75.5" cy="746" r="1.4" fill="#444"/><path d="M830.5,744.5 V737.5 H843.5 V742" fill="none" stroke="#444" stroke-width="1.1"/><circle cx="839.5" cy="746" r="2.6" fill="none" stroke="#444" stroke-width="1.3"/><path d="M839.5,741.5 V743 M839.5,749 V750.5 M835,746 H836.5 M842.5,746 H844" stroke="#444" stroke-width="1.2"/><path d="M1017.5,736.5 H1030.5 V748.5 H1017.5 Z M1017.5,740.5 H1030.5 M1017.5,744.5 H1030.5 M1021.8,736.5 V748.5 M1026.2,736.5 V748.5" fill="none" stroke="#444" stroke-width="1"/><path d="M1057.5,736.5 H1070.5 V748.5 H1057.5 Z" fill="none" stroke="#444" stroke-width="1.1"/><rect x="1059.5" y="738.5" width="9" height="8" fill="none" stroke="#444" stroke-width="1"/><path d="M1061,740.8 H1067 M1061,742.8 H1067 M1061,744.8 H1067" stroke="#444" stroke-width="0.9"/><path d="M1097.5,736.5 H1110.5 V748.5 H1097.5 Z M1097.5,742.5 H1101.5 V736.5 M1104,736.5 V742.5 H1110.5" fill="none" stroke="#444" stroke-width="1.1"/><path d="M1130,742.5 H1138" stroke="#555" stroke-width="1.2"/><path d="M1143,742.5 H1243" stroke="#777" stroke-width="1.2"/><rect x="1191" y="737.5" width="5" height="11" fill="#777"/><path d="M1247.5,742.5 H1256 M1251.75,738.3 V746.7" stroke="#555" stroke-width="1.2"/></svg>
</body></html>
